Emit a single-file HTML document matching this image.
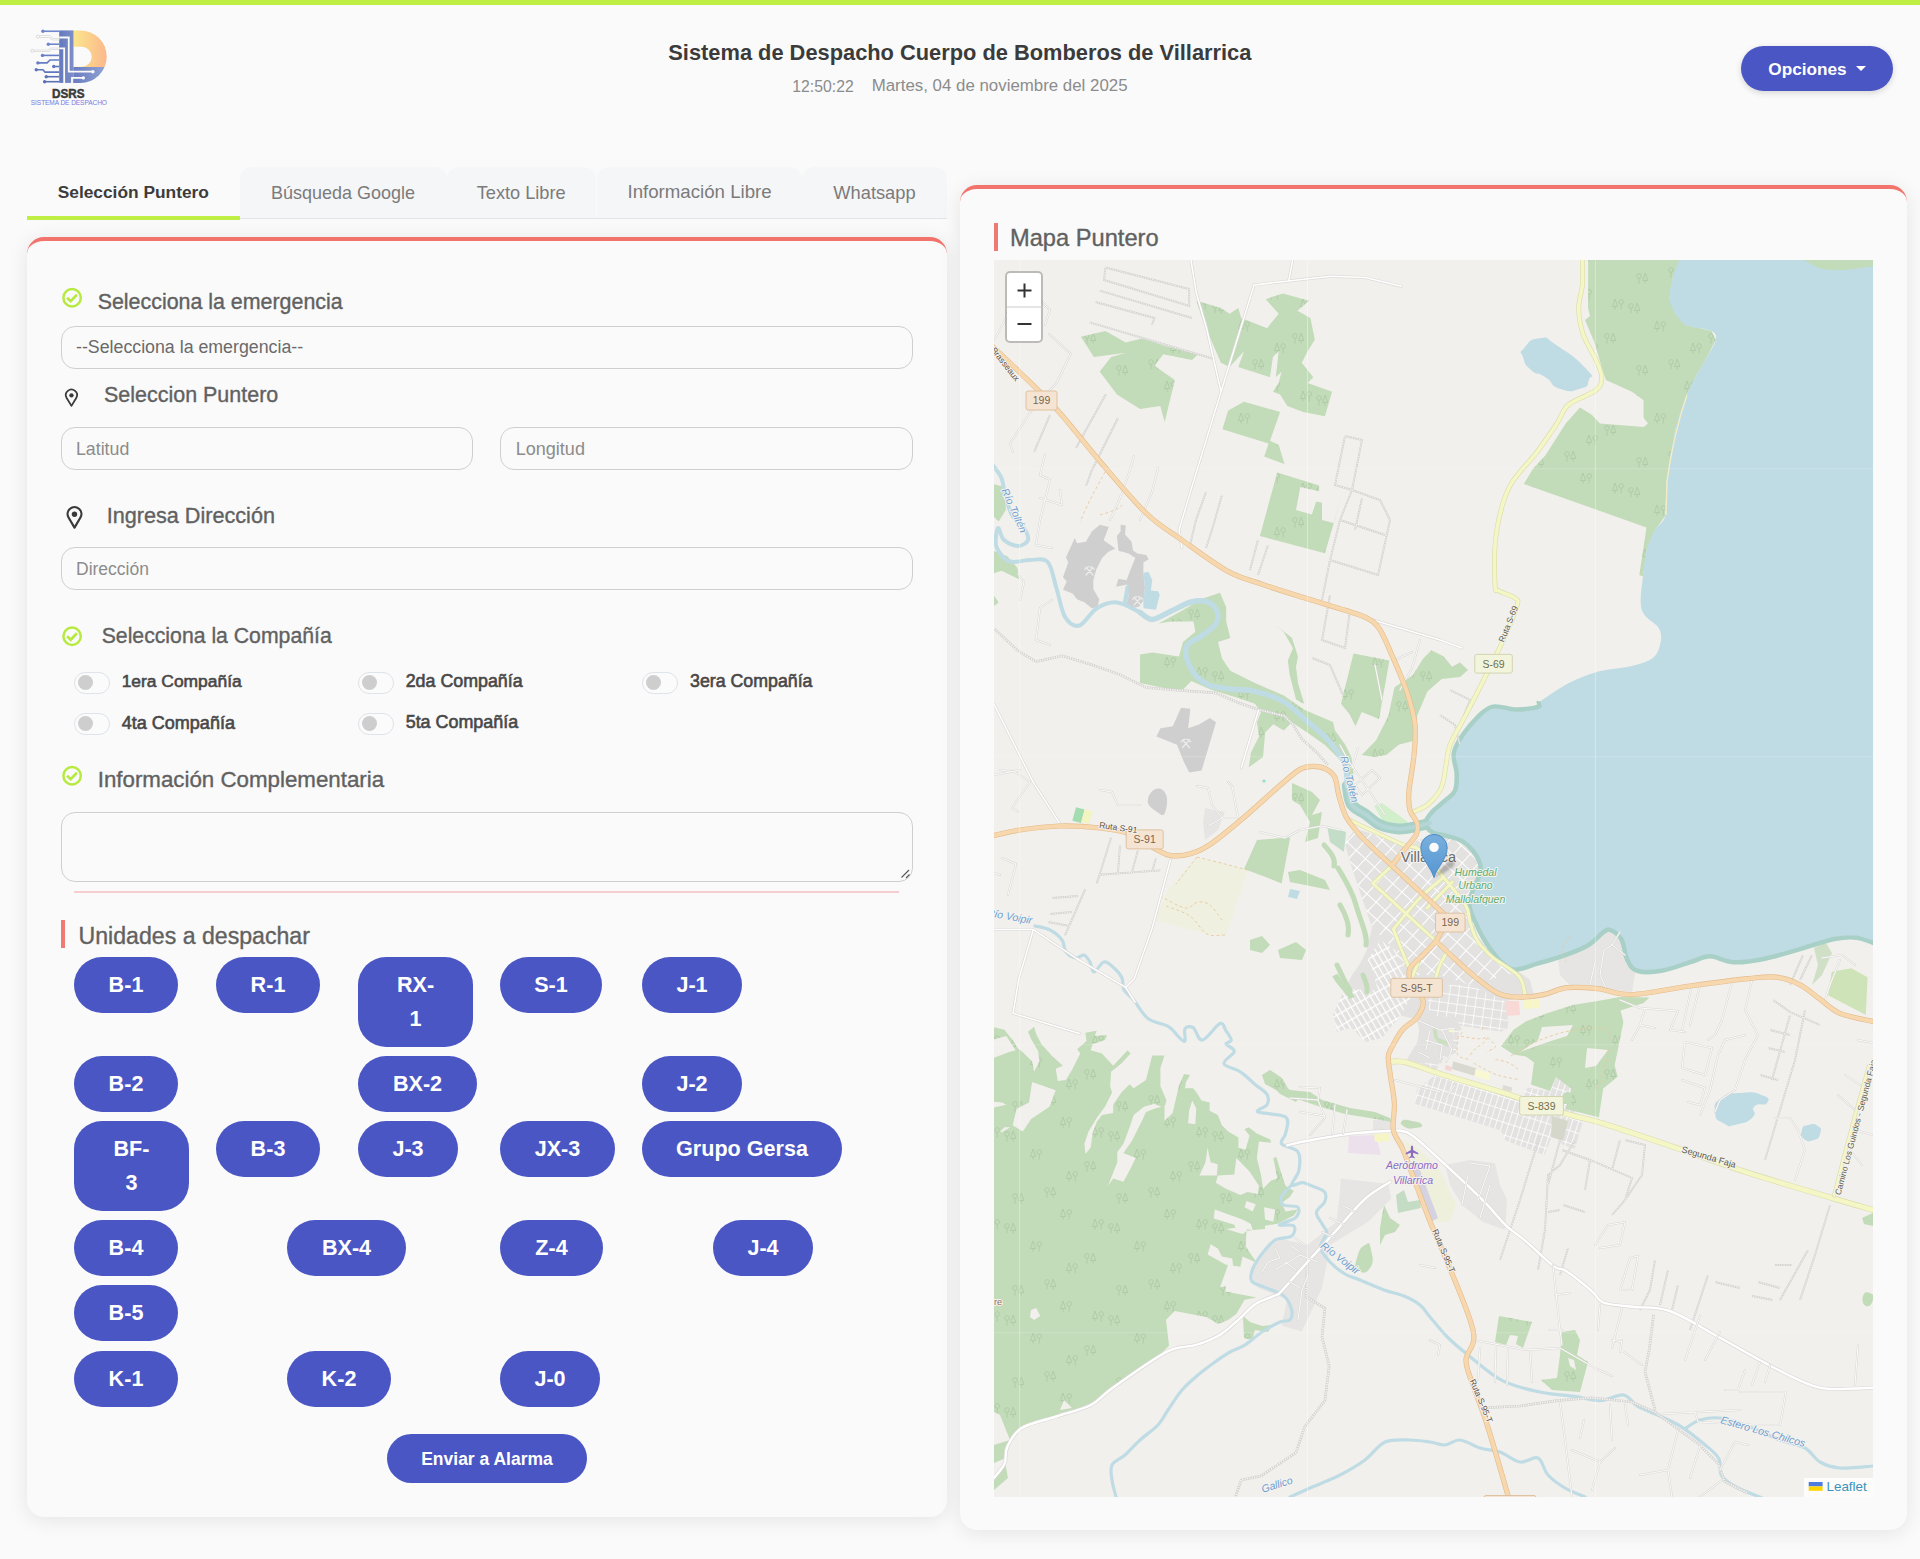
<!DOCTYPE html>
<html lang="es">
<head>
<meta charset="utf-8">
<title>Sistema de Despacho</title>
<style>
*{box-sizing:border-box;margin:0;padding:0}
html,body{width:1920px;height:1559px;overflow:hidden}
body{background:#fafafa;font-family:"Liberation Sans",sans-serif;color:#444;position:relative}
.abs{position:absolute}
.t{position:absolute;white-space:nowrap;line-height:1}
#topbar{left:0;top:0;width:1920px;height:5px;background:#bfee45}
.card{position:absolute;background:#fafafa;border-top:4.5px solid #f1736b;border-radius:17px;box-shadow:0 3px 20px rgba(0,0,0,.09)}
.h{color:#595959;font-size:21px}
.inp{position:absolute;height:43px;border:1px solid #cfcfcf;border-radius:14px;background:#fafafa;color:#8a8a8a;font-size:17px;line-height:41px;padding-left:14px}
.tab{position:absolute;top:167px;height:51px;background:#f5f6f8;border-radius:12px 12px 0 0;color:#7b7b7b;font-size:17px;line-height:50px;text-align:center}
.tg{position:absolute;width:35.5px;height:21.4px;margin:.3px 0 0 .3px;border:1px solid #dfe3ea;border-radius:11px;background:#fbfbfb}
.tg i{position:absolute;left:2.3px;top:2.1px;width:15px;height:15px;border-radius:50%;background:#cecece}
.lb{position:absolute;white-space:nowrap;font-size:16.5px;font-weight:bold;color:#474747;line-height:1}
.u{position:absolute;background:#4a56c4;color:#fff;border-radius:28px;font-weight:bold;font-size:21.6px;text-align:center;line-height:34px;padding-top:11px;height:56px}
</style>
</head>
<body>
<div id="topbar" class="abs"></div>

<!-- LOGO -->
<svg id="logo" class="abs" style="left:28px;top:27px" width="82" height="80" viewBox="28 27 82 80">
<defs>
<linearGradient id="lgO" x1="0" y1="0" x2="1" y2="0"><stop offset="0" stop-color="#fbe68c"/><stop offset="1" stop-color="#fbb88c"/></linearGradient>
<linearGradient id="lgB" x1="0" y1="0" x2="1" y2="0"><stop offset="0" stop-color="#6a7cc0"/><stop offset="1" stop-color="#90a4d4"/></linearGradient>
<linearGradient id="lgS" x1="0" y1="0" x2="1" y2="0"><stop offset="0" stop-color="#6478bd"/><stop offset="1" stop-color="#7e8fc8"/></linearGradient>
<clipPath id="lcTop"><rect x="70" y="28" width="40" height="39"/></clipPath>
<clipPath id="lcBot"><rect x="70" y="67" width="40" height="18"/></clipPath>
</defs>
<!-- D bowl -->
<path clip-path="url(#lcTop)" fill="url(#lgO)" fill-rule="evenodd" d="M73.3 30.4H80.45A26.25 26.25 0 0 1 80.45 82.9H73.3ZM73.3 46.7H81.7A10 10 0 0 1 81.7 66.7H73.3Z"/>
<path clip-path="url(#lcBot)" fill="url(#lgB)" d="M73.3 30.4H80.45A26.25 26.25 0 0 1 80.45 82.9H73.3Z"/>
<!-- stem -->
<rect x="59.2" y="30.4" width="14.3" height="52.5" fill="url(#lgS)"/>
<!-- white circuit lines -->
<g fill="none" stroke="#fafafa" stroke-width="1.8">
<path d="M59.2 37.5H68.75V71.7H92"/>
<path d="M59.2 48.3H64.2V82.9"/>
<path d="M72 82.9V77.9H82.5"/>
</g>
<circle cx="92.9" cy="71.7" r="1.7" fill="#fafafa"/><circle cx="83.3" cy="77.9" r="1.7" fill="#fafafa"/>
<!-- blue traces -->
<g fill="none" stroke="#6f86cd" stroke-width="1.6">
<path d="M59.2 31.25H42.9"/>
<path d="M59.2 44.2H48.3"/>
<path d="M59.2 55.4H42.5" stroke="#667cc4"/>
<path d="M59.2 60H50L47.1 62.9H37.9" stroke="#667cc4"/>
<path d="M59.2 66.5H53.75" stroke="#6076bd"/>
<path d="M59.2 72.1H45L42.9 69.8H36.25" stroke="#6076bd"/>
<path d="M59.2 76.7H46.25" stroke="#5c70b6"/>
<path d="M59.2 81.7H44.6" stroke="#5c70b6"/>
</g>
<g fill="#6f86cd"><circle cx="42.9" cy="31.25" r="1.7"/><circle cx="48.3" cy="44.2" r="1.7"/><circle cx="42.5" cy="55.4" r="1.7" fill="#667cc4"/><circle cx="37.9" cy="62.9" r="1.7" fill="#667cc4"/><circle cx="53.75" cy="66.5" r="1.7" fill="#6076bd"/><circle cx="36.25" cy="69.8" r="1.7" fill="#6076bd"/><circle cx="46.25" cy="76.7" r="1.7" fill="#5c70b6"/><circle cx="44.6" cy="81.7" r="1.7" fill="#5c70b6"/></g>
<!-- white outlined traces -->
<g fill="none" stroke="#c9c9c9" stroke-width="2.2"><path d="M59.2 39.2H52.5L50 36.7H39.5"/><path d="M59.2 48.75H50.8L48.75 50.8H34"/></g>
<g fill="none" stroke="#fafafa" stroke-width="1.2"><path d="M59.2 39.2H52.5L50 36.7H39.5"/><path d="M59.2 48.75H50.8L48.75 50.8H34"/></g>
<circle cx="37.9" cy="36.6" r="1.6" fill="#fafafa" stroke="#c9c9c9" stroke-width=".6"/><circle cx="32.3" cy="50.8" r="1.6" fill="#fafafa" stroke="#c9c9c9" stroke-width=".6"/>
<text x="68.3" y="97.9" text-anchor="middle" font-family="Liberation Sans,sans-serif" font-weight="bold" font-size="12.2" fill="#3a3a3a" stroke="#3a3a3a" stroke-width=".5" textLength="32.6" lengthAdjust="spacingAndGlyphs">DSRS</text>
<text x="30.8" y="105" font-family="Liberation Sans,sans-serif" font-size="6.6" fill="#7b79e0" textLength="76.2" lengthAdjust="spacing">SISTEMA DE DESPACHO</text>
</svg>


<!-- HEADER -->
<div class="abs" id="opc" style="left:1741px;top:46px;width:152px;height:45px;border-radius:23px;background:#4a56c4;box-shadow:0 2px 6px rgba(0,0,0,.15)"></div>
<div class="abs" style="left:1856px;top:66px;width:0;height:0;border-left:5px solid transparent;border-right:5px solid transparent;border-top:5px solid #fff"></div>

<!-- TABS -->
<div class="abs" style="left:27px;top:218px;width:920px;height:1px;background:#e2e4e8"></div>
<div class="tab" style="left:240px;width:207px"></div>
<div class="tab" style="left:447px;width:149px"></div>
<div class="tab" style="left:597px;width:205px"></div>
<div class="tab" style="left:802px;width:145px"></div>
<div class="tab" style="left:27px;width:213px;background:transparent;color:#3c3c3c;font-weight:bold"></div>
<div class="abs" style="left:27px;top:216.3px;width:213px;height:3.4px;background:#bfee45"></div>

<!-- LEFT CARD -->
<div class="card" style="left:27px;top:237px;width:920px;height:1280px"></div>
<!-- RIGHT CARD -->
<div class="card" style="left:960px;top:185px;width:947px;height:1345px"></div>

<!-- FORM -->
<div class="inp" style="left:61px;top:326px;width:852px;color:#6a6a6a"></div>
<div class="inp" style="left:61px;top:427px;width:412px"></div>
<div class="inp" style="left:500px;top:427px;width:413px"></div>
<div class="inp" style="left:61px;top:547px;width:852px"></div>

<div class="tg" style="left:74px;top:672px"><i></i></div>
<div class="tg" style="left:358px;top:672px"><i></i></div>
<div class="tg" style="left:642px;top:672px"><i></i></div>
<div class="tg" style="left:74px;top:713px"><i></i></div>
<div class="tg" style="left:358px;top:713px"><i></i></div>

<div class="inp" style="left:61px;top:812px;width:852px;height:70px"></div>
<div class="abs" style="left:74px;top:891px;width:825px;height:2px;background:#f6cdd2"></div>

<div class="abs" style="left:61px;top:920px;width:4px;height:28px;background:#ee7b73"></div>

<div class="t" style="left:668.3px;top:41.5px;font-size:21.84px;font-weight:bold;color:#3b3b3b">Sistema de Despacho Cuerpo de Bomberos de Villarrica</div>
<div class="t" style="left:792.3px;top:79.0px;font-size:15.77px;color:#8c8c8c">12:50:22</div>
<div class="t" style="left:871.7px;top:78.1px;font-size:16.87px;color:#8c8c8c">Martes, 04 de noviembre del 2025</div>
<div class="t" style="left:1768.3px;top:61.1px;font-size:17.21px;font-weight:bold;color:#ffffff">Opciones</div>
<div class="t" style="left:57.7px;top:184.3px;font-size:17.34px;font-weight:bold;color:#3c3c3c">Selección Puntero</div>
<div class="t" style="left:271.0px;top:183.8px;font-size:17.99px;color:#7b7b7b">Búsqueda Google</div>
<div class="t" style="left:476.7px;top:183.6px;font-size:18.19px;color:#7b7b7b">Texto Libre</div>
<div class="t" style="left:627.5px;top:183.2px;font-size:18.66px;color:#7b7b7b">Información Libre</div>
<div class="t" style="left:833.3px;top:183.5px;font-size:18.30px;color:#7b7b7b">Whatsapp</div>
<div class="t" style="left:97.7px;top:291.9px;font-size:21.40px;-webkit-text-stroke:.35px #616161;color:#616161">Selecciona la emergencia</div>
<div class="t" style="left:76.0px;top:338.9px;font-size:17.78px;color:#6a6a6a">--Selecciona la emergencia--</div>
<div class="t" style="left:104.0px;top:385.2px;font-size:21.48px;-webkit-text-stroke:.35px #616161;color:#616161">Seleccion Puntero</div>
<div class="t" style="left:76.0px;top:440.7px;font-size:17.75px;color:#8c8c8c">Latitud</div>
<div class="t" style="left:515.7px;top:440.4px;font-size:18.06px;color:#8c8c8c">Longitud</div>
<div class="t" style="left:106.7px;top:505.1px;font-size:21.63px;-webkit-text-stroke:.35px #616161;color:#616161">Ingresa Dirección</div>
<div class="t" style="left:76.0px;top:560.9px;font-size:17.51px;color:#8c8c8c">Dirección</div>
<div class="t" style="left:101.7px;top:625.4px;font-size:21.22px;-webkit-text-stroke:.35px #616161;color:#616161">Selecciona la Compañía</div>
<div class="t" style="left:121.7px;top:673.3px;font-size:17.41px;-webkit-text-stroke:.6px #484848;color:#484848">1era Compañía</div>
<div class="t" style="left:405.7px;top:672.9px;font-size:17.83px;-webkit-text-stroke:.6px #484848;color:#484848">2da Compañía</div>
<div class="t" style="left:690.0px;top:673.0px;font-size:17.77px;-webkit-text-stroke:.6px #484848;color:#484848">3era Compañía</div>
<div class="t" style="left:121.7px;top:713.7px;font-size:18.04px;-webkit-text-stroke:.6px #484848;color:#484848">4ta Compañía</div>
<div class="t" style="left:405.7px;top:713.8px;font-size:17.92px;-webkit-text-stroke:.6px #484848;color:#484848">5ta Compañía</div>
<div class="t" style="left:97.7px;top:769.1px;font-size:22.32px;-webkit-text-stroke:.35px #616161;color:#616161">Información Complementaria</div>
<div class="t" style="left:78.5px;top:925.1px;font-size:23.13px;-webkit-text-stroke:.35px #616161;color:#616161">Unidades a despachar</div>
<div class="t" style="left:1010.0px;top:226.9px;font-size:23.67px;-webkit-text-stroke:.35px #616161;color:#616161">Mapa Puntero</div>
<svg class="abs" style="left:0;top:0;pointer-events:none" width="960" height="900" viewBox="0 0 960 900">
<g fill="none" stroke="#b7ea40" stroke-width="2.5">
<circle cx="72.1" cy="297.7" r="8.7"/><path d="M67.1 297.7L70.7 301.2L76.9 294.7" stroke-width="2.7"/>
<circle cx="72.1" cy="636.3" r="8.7"/><path d="M67.1 636.3L70.7 639.8L76.9 633.3" stroke-width="2.7"/>
<circle cx="72.1" cy="775.7" r="8.7"/><path d="M67.1 775.7L70.7 779.2L76.9 772.7" stroke-width="2.7"/>
</g>
<!-- small pin -->
<g transform="translate(65 388.7) scale(0.806)"><path d="M8 21.3L2.05 11.5A6.9 6.9 0 1 1 13.95 11.5Z" fill="none" stroke="#3a3a3a" stroke-width="2.2" stroke-linejoin="round"/><circle cx="8" cy="8.2" r="2.7" fill="#3a3a3a"/></g>
<!-- big pin -->
<g transform="translate(66.5 506)"><path d="M8 21.6L2.05 11.5A6.9 6.9 0 1 1 13.95 11.5Z" fill="none" stroke="#3a3a3a" stroke-width="2.2" stroke-linejoin="round"/><circle cx="8" cy="8.3" r="2.7" fill="#3a3a3a"/></g>
<!-- textarea resize grip -->
<path d="M901.5 877.5L909 870M906 878L909.5 874.5" stroke="#555" stroke-width="1.1" fill="none"/>
</svg>

<!-- UNITS -->
<div class="u" style="left:74px;top:957px;width:104px">B-1</div>
<div class="u" style="left:216px;top:957px;width:104px">R-1</div>
<div class="u" style="left:358px;top:957px;width:115px;height:90px">RX-<br>1</div>
<div class="u" style="left:500px;top:957px;width:102px">S-1</div>
<div class="u" style="left:642px;top:957px;width:100px">J-1</div>

<div class="u" style="left:74px;top:1056px;width:104px">B-2</div>
<div class="u" style="left:358px;top:1056px;width:119px">BX-2</div>
<div class="u" style="left:642px;top:1056px;width:100px">J-2</div>

<div class="u" style="left:74px;top:1121px;width:115px;height:90px">BF-<br>3</div>
<div class="u" style="left:216px;top:1121px;width:104px">B-3</div>
<div class="u" style="left:358px;top:1121px;width:100px">J-3</div>
<div class="u" style="left:500px;top:1121px;width:115px">JX-3</div>
<div class="u" style="left:642px;top:1121px;width:200px">Grupo Gersa</div>

<div class="u" style="left:74px;top:1220px;width:104px">B-4</div>
<div class="u" style="left:287px;top:1220px;width:119px">BX-4</div>
<div class="u" style="left:500px;top:1220px;width:103px">Z-4</div>
<div class="u" style="left:713px;top:1220px;width:100px">J-4</div>

<div class="u" style="left:74px;top:1285px;width:104px">B-5</div>

<div class="u" style="left:74px;top:1351px;width:104px">K-1</div>
<div class="u" style="left:287px;top:1351px;width:104px">K-2</div>
<div class="u" style="left:500px;top:1351px;width:100px">J-0</div>

<div class="u" style="left:387px;top:1434px;width:200px;height:49px;border-radius:25px;font-size:17.5px;padding-top:7.5px">Enviar a Alarma</div>

<!-- MAP TITLE -->
<div class="abs" style="left:994px;top:223px;width:4px;height:28px;background:#ee7b73"></div>

<!-- MAP -->
<svg id="map" class="abs" style="left:994px;top:260px" width="879" height="1237" viewBox="994 260 879 1237">
<defs><pattern id="grid1" width="12.4" height="12.4" patternUnits="userSpaceOnUse" patternTransform="translate(1392 865.6) rotate(42.4)"><path d="M0 0H12.4M0 0V12.4" stroke="#fff" stroke-width="1.9" fill="none"/></pattern>
<pattern id="grid2" width="9" height="9" patternUnits="userSpaceOnUse" patternTransform="translate(1430 1000) rotate(8)"><path d="M0 0H9M0 0V9" stroke="#fff" stroke-width="1.5" fill="none"/></pattern>
<pattern id="grid3" width="5.5" height="11" patternUnits="userSpaceOnUse" patternTransform="translate(1340 1000) rotate(-30)"><path d="M0 0H5.5M0 0V11" stroke="#fff" stroke-width="2.3" fill="none"/></pattern>
<pattern id="grid4" width="6" height="12" patternUnits="userSpaceOnUse" patternTransform="translate(1435.5 1075) rotate(17.6)"><path d="M0 0H6M0 0V12" stroke="#fff" stroke-width="1.6" fill="none"/></pattern>
<pattern id="trees" width="104" height="92" patternUnits="userSpaceOnUse" patternTransform="translate(1003 262)"><g fill="none" stroke="#aecaa6" stroke-width="0.9"><circle cx="12" cy="14" r="2.3"/><path d="M12 16.3v5.2M18.2 11l-2.6 7.5h5.2zM18.2 18.5v3"/><circle cx="66.2" cy="30" r="2.3"/><path d="M66.2 32.3v5.2M60 27l-2.6 7.5h5.2zM60 34.5v3"/><circle cx="36.2" cy="62" r="2.3"/><path d="M36.2 64.3v5.2M30 59l-2.6 7.5h5.2zM30 66.5v3"/><circle cx="84" cy="74" r="2.3"/><path d="M84 76.3v5.2M90.2 71l-2.6 7.5h5.2zM90.2 78.5v3"/><circle cx="44" cy="8" r="2.3"/><path d="M44 10.3v5.2M50.2 5l-2.6 7.5h5.2zM50.2 12.5v3"/><circle cx="98.2" cy="40" r="2.3"/><path d="M98.2 42.3v5.2M92 37l-2.6 7.5h5.2zM92 44.5v3"/><circle cx="4" cy="44" r="2.3"/><path d="M4 46.3v5.2M10.2 41l-2.6 7.5h5.2zM10.2 48.5v3"/><circle cx="72.2" cy="84" r="2.3"/><path d="M72.2 86.3v5.2M66 81l-2.6 7.5h5.2zM66 88.5v3"/></g></pattern>
<linearGradient id="mk" x1="0" y1="0" x2="0" y2="1"><stop offset="0" stop-color="#7ab0de"/><stop offset="1" stop-color="#5596d2"/></linearGradient>
<filter id="blur1" x="-50%" y="-50%" width="200%" height="200%"><feGaussianBlur stdDeviation="1.3"/></filter>
</defs>
<rect x="994" y="260" width="879" height="1237" fill="#f2f0ec"/>
<polygon points="1344.8,843.4 1355,828.7 1380,836 1403.8,845 1421.5,839 1440,836 1455,840 1470,850 1478,863 1478,875 1471,892 1468.7,905.4 1477.5,936.4 1495.2,957 1518.8,971.8 1530,980 1534,996 1505,1001 1509.4,1027.7 1501,1031.8 1460,1025.7 1456,1052.4 1443.7,1058.5 1435.5,1070.8 1410.8,1058.5 1421,1038 1417,1019.5 1400.6,1015.4 1382,1038 1365.7,1042 1351.3,1027.7 1337,1031.8 1332.8,1015.4 1339,1001 1345,988.7 1352,975 1359.5,964.4 1367,949.7 1372,927.5 1362,898 1352,868.5" fill="#e3e2e1" />
<polygon points="1344.8,843.4 1355,828.7 1380,836 1403.8,845 1421.5,839 1440,836 1455,840 1470,850 1478,863 1478,875 1471,892 1468.7,905.4 1477.5,936.4 1495.2,957 1518.8,971.8 1470,985 1440,975 1405,975 1395,950 1372,927.5 1362,898 1352,868.5" fill="url(#grid1)" />
<polygon points="1339,1001 1345,988.7 1378,990.8 1371.8,968.2 1367.7,960 1380,940 1395,950 1405,975 1412,995 1400.6,1015.4 1382,1038 1365.7,1042 1351.3,1027.7 1337,1031.8 1332.8,1015.4" fill="url(#grid3)" />
<polygon points="1425,985 1470,985 1505,1001 1509.4,1027.7 1501,1031.8 1460,1025.7 1456,1052.4 1443.7,1058.5 1435.5,1070.8 1425,1065 1421,1038 1430,1015" fill="url(#grid2)" />
<polygon points="1417,1089.3 1435.5,1075 1521.7,1099.6 1525.8,1087.3 1550.4,1091.4 1556.6,1077 1573,1087.3 1566.8,1103.7 1583.2,1120 1575,1148.8 1562.7,1144.7 1552.5,1134.5 1544.3,1155 1505.3,1140.6 1501,1130.4 1415,1103.7" fill="#e3e2e1" />
<polygon points="1417,1089.3 1435.5,1075 1521.7,1099.6 1525.8,1087.3 1550.4,1091.4 1556.6,1077 1573,1087.3 1566.8,1103.7 1583.2,1120 1575,1148.8 1562.7,1144.7 1552.5,1134.5 1544.3,1155 1505.3,1140.6 1501,1130.4 1415,1103.7" fill="url(#grid4)" />
<polygon points="1552,1116 1568,1121 1563,1141 1551,1137" fill="#d6d7cb" />
<polygon points="1419.8,1015.7 1458.3,1017 1458.3,1024.7 1453.2,1029.8 1453.2,1049 1442.9,1051.6 1441.6,1063.2 1412.1,1063.2 1407,1059.3 1417.2,1042.6 1419.8,1027.2" fill="#e3e2e1" />
<polygon points="1453.2,1061.2 1476.2,1068.3 1475,1076 1451.9,1068.9" fill="#d9d9d2" />
<polygon points="1445.5,1065.1 1451.9,1067 1451.2,1071.5 1444.8,1069.6" fill="#f6d6d2" />
<polygon points="1475.6,1068.9 1490.4,1073.4 1489.1,1080.5 1474.3,1076" fill="#f8f8d2" />
<polygon points="1503.2,1085 1512.2,1087.5 1511.5,1092 1502.5,1089.5" fill="#dcdcd4" />
<polygon points="1449.3,1027.2 1453.8,1027.9 1453.2,1032.4 1448.7,1031.7" fill="#f8f8d2" />
<polygon points="1432.6,1028.5 1436.5,1027.2 1437.8,1037.5 1449.3,1042.6 1448,1046.5 1437.8,1042.6 1433.9,1037.5" fill="#c9dfc0" />
<polygon points="1445,1165 1470,1160 1495,1163 1500,1185 1507,1200 1505,1230 1483,1222 1462,1205 1450,1185" fill="#e6e5e4" />
<polygon points="1340.8,1178.4 1388.4,1184.1 1391.3,1198.6 1368.2,1221.7 1330.6,1244.8 1322,1288.1 1301.8,1331.4 1281.6,1325.6 1287.3,1299.6 1258.5,1288.1 1249.8,1279.4 1252.7,1267.9 1267.1,1247.6 1281.6,1239 1307.6,1244.8 1336.4,1221.7 1339.3,1198.6" fill="#e6e5e4" />
<polygon points="1373,1120 1392,1120 1392,1132 1373,1132" fill="#e6e5e4" />
<polygon points="1403,1140 1420,1150 1440,1170 1456,1205 1450,1222 1436,1222 1425,1190 1412,1160" fill="#eef0dc" />
<polygon points="1411,1165 1418,1165 1438,1218 1431,1222" fill="#d5d3e2" />
<polygon points="1396,1195 1404,1190 1408,1202 1420,1200 1421,1208 1398,1213" fill="#c5dcc4" />
<polygon points="1349,1136 1376,1135 1381,1155 1348,1153" fill="#ece0ec" />
<polygon points="1374,1134 1390,1133 1390,1141 1375,1142" fill="#f5f5c6" />
<polygon points="1505,1001 1519,1001 1520,1015 1507,1016" fill="#f8d9d6" />
<polygon points="1524,1000 1540,999 1540,1008 1524,1009" fill="#f6f6c8" />
<polygon points="1558,958 1572,948 1590,942 1604,932 1612,930 1622,940 1628,958 1636,968 1632,992 1600,988 1570,985 1560,975" fill="#e6e5e4" />
<polygon points="1374,806 1382,803 1408,822 1402,829 1385,825" fill="#d2efcc" />
<polygon points="1197,857 1248,870 1226,935 1207,934 1154,920 1168,890" fill="#eff0df" />
<polygon points="1181,707.8 1190.3,708.8 1188.2,728.3 1199.5,724.2 1209.8,718 1216,722.2 1201.6,770.4 1189.3,772.4 1184,762.2 1177,744.7 1156.4,736.5 1160.5,728.3 1172.8,726.3" fill="#cfcfcf" />
<path d="M1148.2 798 C1150.3 790.9 1156.8 785.9 1162.6 790 C1168.4 794.1 1167.8 803.3 1165.7 810.4 C1163.6 817.5 1162.2 815.5 1156.4 811.4 C1150.6 807.3 1146.1 805.1 1148.2 798Z" fill="#cfcfcf" />
<polygon points="1099.9,524.8 1108.8,527 1103.6,540.3 1115.4,548.4 1108,552.1 1102.1,558 1096.2,569.8 1093.3,580.2 1093.3,589 1099.2,599.3 1097.7,606.7 1091.8,608.2 1084.4,602.3 1077,599.3 1072.6,593.4 1063,589.7 1066.7,581.6 1063,577.2 1068.2,562.5 1066,557.3 1074.8,538.1 1077,543.3 1085.9,541.8 1091.8,531.5" fill="#cfcfcf" />
<polygon points="1120.6,524.8 1125.7,525.6 1125,534.4 1131.6,541.8 1133.1,550.7 1137.5,553.6 1146.4,555.1 1148.6,559.5 1143.4,562.5 1143.4,572.8 1144.9,587.5 1143.4,600.8 1139,606.7 1131.6,608.2 1126.5,603.8 1128.7,596.4 1127.2,584.6 1116.1,586.8 1118.4,578.7 1126.5,580.2 1131.6,566.9 1135.3,558 1128.7,553.6 1118.4,550.7 1116.9,535.9 1120.6,531.5" fill="#cfcfcf" />
<polygon points="1205,808 1225,812 1218,830 1205,840 1203,822" fill="#e6e5e4" />
<polygon points="1588.2,260 1679.7,260 1672.5,279 1669.6,299 1675.4,313.7 1687,325.3 1711.5,331 1715.8,339.7 1707,357 1698.5,371.5 1687,394.6 1675.4,429.2 1666.7,481.2 1665.3,515.8 1655,530 1646.5,550.5 1643,576.4 1639.3,575 1646.5,527.4 1523.8,484 1532.5,469.6 1545.5,455.2 1565.7,423.4 1580,407.6 1591.7,414.8 1600,423.4 1643.6,427 1648,423.4 1643.6,417.7 1643.6,400.3 1632,391.7 1606,380 1603,371.5 1594.5,342.6 1585,320 1590,316 1588,308" fill="#c2dbb8" />
<polygon points="1588.2,260 1679.7,260 1672.5,279 1669.6,299 1675.4,313.7 1687,325.3 1711.5,331 1715.8,339.7 1707,357 1698.5,371.5 1687,394.6 1675.4,429.2 1666.7,481.2 1665.3,515.8 1655,530 1646.5,550.5 1643,576.4 1639.3,575 1646.5,527.4 1523.8,484 1532.5,469.6 1545.5,455.2 1565.7,423.4 1580,407.6 1591.7,414.8 1600,423.4 1643.6,427 1648,423.4 1643.6,417.7 1643.6,400.3 1632,391.7 1606,380 1603,371.5 1594.5,342.6 1585,320 1590,316 1588,308" fill="url(#trees)"/>
<polygon points="1080.9,336.8 1105.5,331.1 1125.7,342.6 1143,338.3 1163.2,345.5 1197.9,354.2 1192.1,359.9 1163.2,354.2 1154.5,365.7 1174.8,380.1 1164.7,422 1160.3,406.1 1140.1,409 1117,394.6 1099.7,371.5 1111.2,357 1125.7,352.7 1093.9,357" fill="#c2dbb8" />
<polygon points="1080.9,336.8 1105.5,331.1 1125.7,342.6 1143,338.3 1163.2,345.5 1197.9,354.2 1192.1,359.9 1163.2,354.2 1154.5,365.7 1174.8,380.1 1164.7,422 1160.3,406.1 1140.1,409 1117,394.6 1099.7,371.5 1111.2,357 1125.7,352.7 1093.9,357" fill="url(#trees)"/>
<polygon points="1196.4,300.7 1220.9,308 1229.6,313.7 1238.3,308 1241.2,318.1 1267.1,328.2 1278.7,313.7 1265.7,299.3 1283,293.5 1309,300.7 1297.4,310.8 1310.4,318.1 1314.8,339.7 1307.6,351.3 1301.8,362.8 1313.3,377.2 1307.6,383 1316.2,385.9 1332.1,391.7 1324.9,416.2 1303.2,411.9 1287.3,406.1 1280.1,394.6 1272.9,391.7 1278.7,383 1281.6,371.5 1275.8,377.2 1278.7,351.3 1272.9,357 1270,377.2 1238.3,367.1 1244,351.3 1229.6,367.1 1220.9,362.8 1203.6,322.4" fill="#c2dbb8" />
<polygon points="1196.4,300.7 1220.9,308 1229.6,313.7 1238.3,308 1241.2,318.1 1267.1,328.2 1278.7,313.7 1265.7,299.3 1283,293.5 1309,300.7 1297.4,310.8 1310.4,318.1 1314.8,339.7 1307.6,351.3 1301.8,362.8 1313.3,377.2 1307.6,383 1316.2,385.9 1332.1,391.7 1324.9,416.2 1303.2,411.9 1287.3,406.1 1280.1,394.6 1272.9,391.7 1278.7,383 1281.6,371.5 1275.8,377.2 1278.7,351.3 1272.9,357 1270,377.2 1238.3,367.1 1244,351.3 1229.6,367.1 1220.9,362.8 1203.6,322.4" fill="url(#trees)"/>
<polygon points="1228.2,410.4 1244,401.8 1280.1,411.9 1270,440.8 1278.7,445.1 1284.5,463.9 1264.2,456.6 1268.6,443.6 1222.4,429.2" fill="#c2dbb8" />
<polygon points="1228.2,410.4 1244,401.8 1280.1,411.9 1270,440.8 1278.7,445.1 1284.5,463.9 1264.2,456.6 1268.6,443.6 1222.4,429.2" fill="url(#trees)"/>
<polygon points="1277.2,472.5 1319.1,485.5 1319.1,491.3 1300.3,486.9 1296,510 1311.9,514.4 1316.2,501.4 1322,502.8 1322,520.1 1333.5,523 1342.2,494.2 1324.9,553.3 1259.9,536" fill="#c2dbb8" />
<polygon points="1277.2,472.5 1319.1,485.5 1319.1,491.3 1300.3,486.9 1296,510 1311.9,514.4 1316.2,501.4 1322,502.8 1322,520.1 1333.5,523 1342.2,494.2 1324.9,553.3 1259.9,536" fill="url(#trees)"/>
<polygon points="1158.5,623.6 1181,611.3 1201.6,599 1220,592.8 1226.2,607.2 1226.2,621.6 1230.3,638 1218,642 1222,658.5 1230.3,670.8 1255,683 1283.7,695.5 1304.2,709.8 1333,722 1335,730.4 1345.3,744.7 1351.4,757 1353.5,773.5 1347.3,777.6 1341,761 1324.7,744.7 1304.2,730.4 1291.9,722.2 1283.7,730.4 1273.4,724.2 1265.2,732.4 1263,757 1248.8,767.3 1250.8,753 1259,736.5 1257,722.2 1261,712 1255,703.7 1236.5,697.5 1209.8,689.3 1191.3,681 1181,691.4 1140,683 1140,654.4 1152.3,652.4 1179,656.5 1183,642 1195.4,631.8 1193.4,621.6 1170.8,621.6" fill="#c2dbb8" />
<polygon points="1158.5,623.6 1181,611.3 1201.6,599 1220,592.8 1226.2,607.2 1226.2,621.6 1230.3,638 1218,642 1222,658.5 1230.3,670.8 1255,683 1283.7,695.5 1304.2,709.8 1333,722 1335,730.4 1345.3,744.7 1351.4,757 1353.5,773.5 1347.3,777.6 1341,761 1324.7,744.7 1304.2,730.4 1291.9,722.2 1283.7,730.4 1273.4,724.2 1265.2,732.4 1263,757 1248.8,767.3 1250.8,753 1259,736.5 1257,722.2 1261,712 1255,703.7 1236.5,697.5 1209.8,689.3 1191.3,681 1181,691.4 1140,683 1140,654.4 1152.3,652.4 1179,656.5 1183,642 1195.4,631.8 1193.4,621.6 1170.8,621.6" fill="url(#trees)"/>
<polygon points="1275.5,624.7 1292,638 1298,656.5 1296,666.7 1298,683 1304.2,703.7 1296,699.6 1289.8,675 1287.8,660.6 1293,648.3 1283.7,631.8" fill="#c2dbb8" />
<polygon points="1275.5,624.7 1292,638 1298,656.5 1296,666.7 1298,683 1304.2,703.7 1296,699.6 1289.8,675 1287.8,660.6 1293,648.3 1283.7,631.8" fill="url(#trees)"/>
<polygon points="1353.5,653.4 1389.4,660.6 1379,719 1361.7,711.9 1355.5,726.3 1349.4,714 1341,703.7" fill="#c2dbb8" />
<polygon points="1353.5,653.4 1389.4,660.6 1379,719 1361.7,711.9 1355.5,726.3 1349.4,714 1341,703.7" fill="url(#trees)"/>
<polygon points="1394.5,687.3 1413,675 1423.2,658.5 1431.5,650.3 1443.8,656.5 1452,666.7 1460,662.6 1468,670 1460,677 1441.7,679 1427.4,691.4 1417,716 1415,740.6 1398.6,744.7 1386.3,755 1374,757 1361.7,755 1376,740.6 1388.4,716" fill="#c2dbb8" />
<polygon points="1394.5,687.3 1413,675 1423.2,658.5 1431.5,650.3 1443.8,656.5 1452,666.7 1460,662.6 1468,670 1460,677 1441.7,679 1427.4,691.4 1417,716 1415,740.6 1398.6,744.7 1386.3,755 1374,757 1361.7,755 1376,740.6 1388.4,716" fill="url(#trees)"/>
<polygon points="992.9,484.1 1004.4,486.9 1005.9,510 998.7,521.6 992.9,515.8" fill="#c2dbb8" />
<polygon points="992.9,550.5 1007.3,556.2 1017.4,567.8 1018.9,579.3 1001.5,570.7 992.9,573.6" fill="#c2dbb8" />
<polygon points="992.9,550.5 1007.3,556.2 1017.4,567.8 1018.9,579.3 1001.5,570.7 992.9,573.6" fill="url(#trees)"/>
<polygon points="992.9,593.8 998.7,602.4 992.9,606.8" fill="#c2dbb8" />
<polygon points="1244,869 1257,840 1290.2,837.2 1281.6,883.4 1267,877.6" fill="#c2dbb8" />
<polygon points="1292,783 1312,792 1320,800 1312,815 1322,812 1318,838 1305,842 1310,822 1300,805 1292,800" fill="#c2dbb8" />
<polygon points="1292,783 1312,792 1320,800 1312,815 1322,812 1318,838 1305,842 1310,822 1300,805 1292,800" fill="url(#trees)"/>
<polygon points="1288,872 1300,870 1325,880 1330,890 1310,886 1290,882" fill="#c2dbb8" />
<polygon points="1288,872 1300,870 1325,880 1330,890 1310,886 1290,882" fill="url(#trees)"/>
<polygon points="1250,940 1262,936 1270,945 1262,953 1250,950" fill="#c2dbb8" />
<polygon points="1278,950 1296,942 1306,950 1302,960 1280,958" fill="#c2dbb8" />
<polygon points="1327,826 1346,832 1344,852 1330,842" fill="#c4ddc9" />
<path d="M1324 845 C1330 852 1336 858 1334 866 M1338 868 C1345 880 1352 890 1356 905 C1360 920 1368 935 1366 945 M1340 905 C1346 915 1350 925 1348 935 M1337 965 C1342 975 1346 985 1350 990 M1363 975 C1366 982 1368 988 1367 992" stroke="#c2dbb8" stroke-width="5" fill="none" stroke-linecap="round"/>
<polygon points="1501,1046.2 1513.5,1029.8 1525.8,1021.6 1546.3,1013.4 1573,1005 1597.6,1001 1620,997 1649.4,997.4 1643.6,1003 1620.5,1010.4 1623.4,1022 1614.7,1065.3 1617.6,1076.8 1603.2,1088.4 1598.9,1117.2 1565.7,1109 1571.5,1088.9 1556,1077 1550,1091 1531,1084.5 1534,1062.6 1525.8,1056.5 1513.5,1054.4" fill="#c2dbb8" />
<polygon points="1501,1046.2 1513.5,1029.8 1525.8,1021.6 1546.3,1013.4 1573,1005 1597.6,1001 1620,997 1649.4,997.4 1643.6,1003 1620.5,1010.4 1623.4,1022 1614.7,1065.3 1617.6,1076.8 1603.2,1088.4 1598.9,1117.2 1565.7,1109 1571.5,1088.9 1556,1077 1550,1091 1531,1084.5 1534,1062.6 1525.8,1056.5 1513.5,1054.4" fill="url(#trees)"/>
<polygon points="1542,1027 1573,1025 1567,1036 1548,1042 1520,1052 1538,1040" fill="#f2f0ec" />
<polygon points="1587,1048 1608,1050 1596,1066 1585,1068" fill="#f2f0ec" />
<polygon points="1831.7,971.8 1851.4,968.2 1867.6,977.2 1865.8,1015 1828,995.2" fill="#cfe3b8" />
<polygon points="1814,948 1826,943 1832,953 1822,975 1812,985 1818,965" fill="#cfe0c6" />
<path d="M1402 1121 C1404.3 1119 1405.3 1119.7 1412 1121 C1418.7 1122.3 1421 1122.7 1422 1125 C1423 1127.3 1420.7 1127.3 1415 1128 C1409.3 1128.7 1409.3 1129.3 1405 1127 C1400.7 1124.7 1399.7 1123 1402 1121Z" fill="#c2dbb8" />
<path d="M1335 975 C1340 985 1348 990 1352 998" stroke="#c2dbb8" stroke-width="6" fill="none"/>
<polygon points="1384,1205 1390,1218 1400,1225 1395,1232 1385,1235 1380,1245 1380,1228" fill="#c2dbb8" />
<polygon points="1384,1205 1390,1218 1400,1225 1395,1232 1385,1235 1380,1245 1380,1228" fill="url(#trees)"/>
<path d="M1357 1258 C1359.3 1249.7 1360.3 1247.7 1365 1245 C1369.7 1242.3 1369.3 1242.3 1371 1250 C1372.7 1257.7 1374.3 1261.3 1370 1268 C1365.7 1274.7 1362.3 1273.3 1358 1270 C1353.7 1266.7 1354.7 1266.3 1357 1258Z" fill="#c2dbb8" />
<path d="M1561 1100 C1561.7 1096 1564.3 1092 1568 1092 C1571.7 1092 1572.7 1096 1572 1100 C1571.3 1104 1569.7 1104 1566 1104 C1562.3 1104 1560.3 1104 1561 1100Z" fill="#c2dbb8" />
<polygon points="1499,1316 1532,1322 1523,1348 1516,1344 1518,1336 1510,1335 1506,1345 1495,1342" fill="#c2dbb8" />
<polygon points="1499,1316 1532,1322 1523,1348 1516,1344 1518,1336 1510,1335 1506,1345 1495,1342" fill="url(#trees)"/>
<polygon points="1562,1332 1575,1330 1580,1340 1577,1355 1588,1362 1580,1392 1552,1390 1541,1380 1557,1378 1560,1355" fill="#c2dbb8" />
<polygon points="1562,1332 1575,1330 1580,1340 1577,1355 1588,1362 1580,1392 1552,1390 1541,1380 1557,1378 1560,1355" fill="url(#trees)"/>
<polygon points="1568,1358 1574,1360 1576,1370 1570,1366" fill="#f2f0ec" />
<path d="M1863 1296 C1864.3 1291.7 1866.7 1291.7 1870 1293 C1873.3 1294.3 1874.3 1295.7 1873 1300 C1871.7 1304.3 1869.3 1307.3 1866 1306 C1862.7 1304.7 1861.7 1300.3 1863 1296Z" fill="#c2dbb8" />
<polygon points="1862,1218 1873,1213 1873,1226 1864,1224" fill="#c2dbb8" />
<polygon points="1262,1075 1275,1078 1290,1090 1310,1092 1322,1100 1350,1108 1375,1112 1390,1118 1392,1122 1370,1118 1345,1114 1318,1106 1300,1100 1280,1092 1265,1084" fill="#c2dbb8" />
<polygon points="1262,1075 1275,1078 1290,1090 1310,1092 1322,1100 1350,1108 1375,1112 1390,1118 1392,1122 1370,1118 1345,1114 1318,1106 1300,1100 1280,1092 1265,1084" fill="url(#trees)"/>
<polygon points="992.1,1026.7 1004.4,1029.8 1012.6,1040 1017.7,1048.2 1022.8,1052.3 1032.1,1061.6 1034.1,1071.8 1039.3,1061.6 1038.2,1051.3 1031.1,1039 1028,1031.8 1034.1,1026.7 1036.2,1033.9 1041.3,1044.1 1051.6,1055.4 1062.9,1065.7 1055.7,1068.8 1057.7,1081.1 1065.9,1080 1072.1,1069.8 1080.3,1053.4 1077.2,1049.3 1086.5,1041.1 1085.4,1032.8 1096.7,1030.8 1094.7,1035.9 1107,1034.9 1104.9,1040 1092.6,1044.1 1090.6,1050.3 1101.9,1053.4 1113.2,1065.7 1127.5,1050.3 1130.6,1053.4 1121.4,1063.6 1111.1,1071.8 1110.1,1086.2 1112.1,1092.4 1104.9,1106.7 1096.7,1118 1088.5,1131.4 1084.4,1143.7 1085.4,1153.9 1090.6,1147.8 1092.6,1133.4 1096.7,1122.1 1101.9,1114.9 1113.2,1112.9 1113.2,1104.7 1121.4,1092.4 1129.6,1084.2 1133.7,1088.3 1146,1080 1152.2,1055.4 1164.5,1055.4 1160.4,1067.7 1160.4,1086.2 1166.5,1100.6 1164.5,1106.7 1164.5,1121.1 1172.7,1112.9 1178.8,1086.2 1184,1073.9 1190.1,1074.9 1186,1082.1 1185,1088.3 1193.2,1088.3 1197.3,1093.4 1201.4,1100.6 1209.6,1102.6 1209.6,1110.8 1217.8,1114.9 1221.9,1125.2 1228.1,1131.4 1238.4,1137.5 1238.4,1147.8 1245.5,1149.8 1249.6,1135.5 1244.5,1129.3 1248.6,1127.3 1256.8,1133.4 1270.2,1139.6 1271.2,1142.7 1258.9,1141.6 1256.8,1158 1260.9,1174.5 1263,1188.8 1271.2,1180.6 1277.4,1178.6 1273.3,1158 1276.3,1157 1283.5,1180.6 1285.6,1185.8 1293.8,1190.9 1289.7,1197 1281.5,1203.2 1285.6,1211.4 1297.9,1209.4 1293.8,1215.5 1277.4,1223.7 1265,1225.8 1265,1228.9 1252.7,1229.9 1246.6,1230.9 1245.5,1246.3 1256.8,1262.7 1242.5,1256.6 1240.4,1266.8 1228.1,1264.8 1219.9,1287.4 1226,1286.3 1225,1291.5 1256.8,1297.6 1244.5,1299.7 1236.3,1314 1228.1,1320 1218,1324 1206.5,1317 1174.8,1311 1166,1319.8 1169,1345.8 1157.4,1357.3 1111.2,1389 1091,1405 1056.4,1415 1021.8,1428 1007.3,1444 1004.4,1458.4 992,1464" fill="#c2dbb8" />
<polygon points="992.1,1026.7 1004.4,1029.8 1012.6,1040 1017.7,1048.2 1022.8,1052.3 1032.1,1061.6 1034.1,1071.8 1039.3,1061.6 1038.2,1051.3 1031.1,1039 1028,1031.8 1034.1,1026.7 1036.2,1033.9 1041.3,1044.1 1051.6,1055.4 1062.9,1065.7 1055.7,1068.8 1057.7,1081.1 1065.9,1080 1072.1,1069.8 1080.3,1053.4 1077.2,1049.3 1086.5,1041.1 1085.4,1032.8 1096.7,1030.8 1094.7,1035.9 1107,1034.9 1104.9,1040 1092.6,1044.1 1090.6,1050.3 1101.9,1053.4 1113.2,1065.7 1127.5,1050.3 1130.6,1053.4 1121.4,1063.6 1111.1,1071.8 1110.1,1086.2 1112.1,1092.4 1104.9,1106.7 1096.7,1118 1088.5,1131.4 1084.4,1143.7 1085.4,1153.9 1090.6,1147.8 1092.6,1133.4 1096.7,1122.1 1101.9,1114.9 1113.2,1112.9 1113.2,1104.7 1121.4,1092.4 1129.6,1084.2 1133.7,1088.3 1146,1080 1152.2,1055.4 1164.5,1055.4 1160.4,1067.7 1160.4,1086.2 1166.5,1100.6 1164.5,1106.7 1164.5,1121.1 1172.7,1112.9 1178.8,1086.2 1184,1073.9 1190.1,1074.9 1186,1082.1 1185,1088.3 1193.2,1088.3 1197.3,1093.4 1201.4,1100.6 1209.6,1102.6 1209.6,1110.8 1217.8,1114.9 1221.9,1125.2 1228.1,1131.4 1238.4,1137.5 1238.4,1147.8 1245.5,1149.8 1249.6,1135.5 1244.5,1129.3 1248.6,1127.3 1256.8,1133.4 1270.2,1139.6 1271.2,1142.7 1258.9,1141.6 1256.8,1158 1260.9,1174.5 1263,1188.8 1271.2,1180.6 1277.4,1178.6 1273.3,1158 1276.3,1157 1283.5,1180.6 1285.6,1185.8 1293.8,1190.9 1289.7,1197 1281.5,1203.2 1285.6,1211.4 1297.9,1209.4 1293.8,1215.5 1277.4,1223.7 1265,1225.8 1265,1228.9 1252.7,1229.9 1246.6,1230.9 1245.5,1246.3 1256.8,1262.7 1242.5,1256.6 1240.4,1266.8 1228.1,1264.8 1219.9,1287.4 1226,1286.3 1225,1291.5 1256.8,1297.6 1244.5,1299.7 1236.3,1314 1228.1,1320 1218,1324 1206.5,1317 1174.8,1311 1166,1319.8 1169,1345.8 1157.4,1357.3 1111.2,1389 1091,1405 1056.4,1415 1021.8,1428 1007.3,1444 1004.4,1458.4 992,1464" fill="url(#trees)"/>
<polygon points="1032.1,1082.1 1055.7,1090.3 1049.5,1106.7 1031.1,1119 1022.8,1131.4 1012.6,1125.2 1016.7,1108.8 1029,1102.6" fill="#f2f0ec" />
<polygon points="992.1,1101.6 1002.3,1102.6 1006.4,1104.7 992.1,1107.8" fill="#f2f0ec" />
<polygon points="1000.3,1131.4 1004.4,1127.3 1010.5,1127.3 1001.3,1132.4" fill="#f2f0ec" />
<polygon points="992.1,1040 1006.4,1035.9 1011.6,1044.1 1015.7,1050.3 1008.5,1052.3 992.1,1058.5" fill="#f2f0ec" />
<polygon points="1161.4,1106.7 1154.2,1103.7 1143.9,1106.7 1133.7,1114.9 1129.6,1127.3 1123.4,1143.7 1117.3,1151.9 1117.3,1162.2 1108,1185.8 1113.2,1178.6 1123.4,1181.7 1129.6,1170.4 1135.7,1158 1123.4,1152.9 1131.6,1141.6 1141.9,1121.1 1146,1111.9 1154.2,1108.8" fill="#f2f0ec" />
<polygon points="1192.2,1100.6 1196.3,1108.8 1195.3,1124.2 1188.1,1123.2 1189.1,1110.8" fill="#f2f0ec" />
<polygon points="1207.6,1147.8 1210.6,1162.2 1217.8,1164.2 1216.8,1175.5 1199.4,1175.5 1205.5,1162.2" fill="#f2f0ec" />
<polygon points="1236.3,1158 1249.6,1171.4 1258.9,1185.8 1257.9,1194 1247.6,1191.9 1240.4,1195 1226,1188.8 1215.8,1182.7 1217.8,1175.5 1234.3,1174.5" fill="#f2f0ec" />
<polygon points="1214.8,1209.4 1242.5,1219.6 1250.7,1223.7 1252.7,1229.9 1235.3,1227.8 1234.3,1224.8 1213.7,1218.6" fill="#f2f0ec" />
<polygon points="1246.6,1201.1 1255.8,1204.2 1252.7,1211.4 1244.5,1207.3" fill="#f2f0ec" />
<polygon points="1264,1207.3 1275.3,1209.4 1273.3,1221.7 1265,1219.6" fill="#f2f0ec" />
<polygon points="1226,1228.9 1242.5,1234 1246.6,1230.9 1247.6,1227.8 1235.3,1227.8" fill="#f2f0ec" />
<polygon points="1210.6,1244.3 1217.8,1248.4 1221.9,1256.6 1232.2,1258.6 1233.2,1265.8 1226,1264.8 1207.6,1254.5" fill="#f2f0ec" />
<polygon points="1031.1,1309.9 1036.2,1307.9 1040.3,1316.1 1034.1,1320 1030,1317.1" fill="#f2f0ec" />
<polygon points="1060,1410 1064,1400 1072,1408" fill="#f2f0ec" />
<polygon points="994,1412 1000,1415 1010,1440 994,1445" fill="#f2f0ec" />
<polygon points="994,1480 1005,1462 1008,1478 994,1490" fill="#c2dbb8" />
<polygon points="1262,1075 1270,1070 1282,1078 1290,1092 1300,1096 1296,1102 1280,1094" fill="#c2dbb8" />
<polygon points="1262,1075 1270,1070 1282,1078 1290,1092 1300,1096 1296,1102 1280,1094" fill="url(#trees)"/>
<polygon points="1243,1316 1250,1322 1262,1326 1272,1325 1268,1332 1255,1330 1252,1340 1244,1338" fill="#c2dbb8" />
<polygon points="1243,1316 1250,1322 1262,1326 1272,1325 1268,1332 1255,1330 1252,1340 1244,1338" fill="url(#trees)"/>
<path d="M1541 701.5 C1540.8 702.7 1543.8 706.8 1539.7 708.5 C1535.6 710.2 1524.3 711.7 1516.6 711.7 C1508.9 711.8 1499.8 707.6 1493.5 708.8 C1487.2 710 1483.8 714.3 1479 718.9 C1474.2 723.5 1468.4 730.4 1464.6 736.2 C1460.8 742 1457 747.2 1456 753.5 C1455 759.8 1458.8 767.3 1458.9 773.7 C1459.1 780.1 1459.2 786.8 1456.9 791.8 C1454.6 796.8 1448.9 799.9 1445 803.6 C1441.1 807.3 1436.1 810.7 1433.3 813.9 C1430.5 817.1 1428 820.1 1428 822.8 C1428 825.5 1430 828.4 1433.3 830.2 C1436.6 832.1 1443.1 832.4 1448 833.9 C1452.9 835.4 1458.4 836.4 1462.8 839 C1467.2 841.6 1471.4 845.4 1474.6 849.3 C1477.8 853.2 1480.8 858.4 1482 862.6 C1483.2 866.8 1483.2 869.5 1482 874.4 C1480.8 879.3 1476.3 886.8 1474.6 892 C1472.9 897.2 1471.1 900.5 1471.6 905.4 C1472.1 910.3 1475.3 916.4 1477.5 921.6 C1479.7 926.8 1482.2 931.7 1484.9 936.4 C1487.6 941.1 1490.6 945.5 1493.8 949.7 C1497 953.9 1500.3 958.5 1504 961.5 C1507.7 964.5 1510.5 967.4 1515.9 967.4 C1521.3 967.4 1529.8 963.5 1536.6 961.5 C1543.4 959.5 1548.8 958.5 1557 955.6 C1565.2 952.7 1578.2 948.3 1585.9 944 C1593.6 939.7 1598.9 932.2 1603.2 929.6 C1607.5 927 1608.5 926.8 1611.9 928.2 C1615.3 929.7 1620.5 933.2 1623.4 938.3 C1626.3 943.3 1626.8 953.5 1629.2 958.5 C1631.6 963.5 1632.6 966.9 1637.9 968.6 C1643.2 970.3 1652.3 970.1 1661 968.6 C1669.7 967.1 1681.6 962.3 1689.8 959.9 C1698 957.5 1702.8 954.1 1710 954.1 C1717.2 954.1 1724.3 959.4 1733 959.9 C1741.7 960.4 1750.9 959.2 1762 957 C1773.1 954.8 1787.5 950.3 1799.5 946.9 C1811.5 943.5 1824.4 938.7 1834 936.8 C1843.6 934.9 1850.4 934.7 1857.2 935.4 C1864 936.1 1872 940.2 1875 941.2" fill="none" stroke="#a8d0c6" stroke-width="9" stroke-linejoin="round"/>
<path d="M1347.3 785.8 C1348 788.9 1348.3 799.5 1351.4 804.3 C1354.5 809.1 1361 811.1 1365.8 814.5 C1370.6 817.9 1374.5 822.4 1380 824.8 C1385.5 827.2 1392.8 828.6 1398.6 828.9 C1404.4 829.2 1409.8 827.8 1415 826.8 C1420.2 825.8 1427.5 823.6 1430 823" fill="none" stroke="#a8d0c6" stroke-width="11" stroke-linecap="round"/>
<path d="M1679.7 258 C1678.5 261.5 1674.2 272.2 1672.5 279 C1670.8 285.8 1669.1 293.2 1669.6 299 C1670.1 304.8 1672.5 309.3 1675.4 313.7 C1678.3 318.1 1681 322.4 1687 325.3 C1693 328.2 1706.7 328.6 1711.5 331 C1716.3 333.4 1716.5 335.4 1715.8 339.7 C1715 344 1709.9 351.7 1707 357 C1704.1 362.3 1701.8 365.2 1698.5 371.5 C1695.2 377.8 1690.8 385 1687 394.6 C1683.2 404.2 1678.8 414.8 1675.4 429.2 C1672 443.6 1668.4 466.8 1666.7 481.2 C1665 495.6 1667.2 507.7 1665.3 515.8 C1663.3 523.9 1658.1 524.2 1655 530 C1651.9 535.8 1648.5 542.8 1646.5 550.5 C1644.5 558.2 1644 567.8 1643 576.4 C1642 585 1640.4 595.9 1640.7 602.4 C1641 608.9 1642.1 611.3 1645 615.4 C1647.9 619.5 1655.3 622.9 1658 627 C1660.7 631.1 1661.7 635 1661 640 C1660.3 645 1658.5 653 1653.7 657.3 C1648.9 661.6 1641.4 663.6 1632 666 C1622.6 668.4 1608 668.8 1597.4 671.7 C1586.8 674.6 1577.2 678.9 1568.6 683.2 C1559.9 687.5 1550.1 694.7 1545.5 697.7 C1540.9 700.8 1542 699.7 1541 701.5 C1540 703.3 1543.8 706.8 1539.7 708.5 C1535.6 710.2 1524.3 711.7 1516.6 711.7 C1508.9 711.8 1499.8 707.6 1493.5 708.8 C1487.2 710 1483.8 714.3 1479 718.9 C1474.2 723.5 1468.4 730.4 1464.6 736.2 C1460.8 742 1457 747.2 1456 753.5 C1455 759.8 1458.8 767.3 1458.9 773.7 C1459.1 780.1 1459.2 786.8 1456.9 791.8 C1454.6 796.8 1448.9 799.9 1445 803.6 C1441.1 807.3 1436.1 810.7 1433.3 813.9 C1430.5 817.1 1428 820.1 1428 822.8 C1428 825.5 1430 828.4 1433.3 830.2 C1436.6 832.1 1443.1 832.4 1448 833.9 C1452.9 835.4 1458.4 836.4 1462.8 839 C1467.2 841.6 1471.4 845.4 1474.6 849.3 C1477.8 853.2 1480.8 858.4 1482 862.6 C1483.2 866.8 1483.2 869.5 1482 874.4 C1480.8 879.3 1476.3 886.8 1474.6 892 C1472.9 897.2 1471.1 900.5 1471.6 905.4 C1472.1 910.3 1475.3 916.4 1477.5 921.6 C1479.7 926.8 1482.2 931.7 1484.9 936.4 C1487.6 941.1 1490.6 945.5 1493.8 949.7 C1497 953.9 1500.3 958.5 1504 961.5 C1507.7 964.5 1510.5 967.4 1515.9 967.4 C1521.3 967.4 1529.8 963.5 1536.6 961.5 C1543.4 959.5 1548.8 958.5 1557 955.6 C1565.2 952.7 1578.2 948.3 1585.9 944 C1593.6 939.7 1598.9 932.2 1603.2 929.6 C1607.5 927 1608.5 926.8 1611.9 928.2 C1615.3 929.7 1620.5 933.2 1623.4 938.3 C1626.3 943.3 1626.8 953.5 1629.2 958.5 C1631.6 963.5 1632.6 966.9 1637.9 968.6 C1643.2 970.3 1652.3 970.1 1661 968.6 C1669.7 967.1 1681.6 962.3 1689.8 959.9 C1698 957.5 1702.8 954.1 1710 954.1 C1717.2 954.1 1724.3 959.4 1733 959.9 C1741.7 960.4 1750.9 959.2 1762 957 C1773.1 954.8 1787.5 950.3 1799.5 946.9 C1811.5 943.5 1824.4 938.7 1834 936.8 C1843.6 934.9 1853.3 935.6 1857.2 935.4 L1875 941 L1875 258 Z" fill="#bfdbe4"/>
<path d="M1347.3 785.8 C1348 788.9 1348.3 799.5 1351.4 804.3 C1354.5 809.1 1361 811.1 1365.8 814.5 C1370.6 817.9 1374.5 822.4 1380 824.8 C1385.5 827.2 1392.8 828.6 1398.6 828.9 C1404.4 829.2 1409.8 827.8 1415 826.8 C1420.2 825.8 1427.5 823.6 1430 823" fill="none" stroke="#b4d6d6" stroke-width="4" stroke-linecap="round"/>
<polygon points="1801,258 1817,267.5 1830,270 1845.7,270 1875,266 1875,258" fill="#c2dbb8" />
<polygon points="1801,258 1817,267.5 1830,270 1845.7,270 1875,266 1875,258" fill="url(#trees)"/>
<path d="M1687 395C1680 415 1672 445 1667 481L1666 515" fill="none" stroke="#f3ecc8" stroke-width="1.4"/>
<path d="M1140 612.3 C1142 613.5 1147.2 619.7 1152.3 619.5 C1157.4 619.3 1164.3 614.2 1170.8 611.3 C1177.3 608.4 1185.1 603.5 1191.3 602 C1197.5 600.5 1203.4 600.5 1207.7 602 C1212 603.5 1215.6 607.7 1217 611.3 C1218.4 614.9 1218.6 619.5 1216 623.6 C1213.4 627.7 1206.2 632.6 1201.6 636 C1197 639.4 1190.8 640.8 1188.2 644.2 C1185.6 647.6 1185 651.4 1186.2 656.5 C1187.4 661.6 1191.5 670.2 1195.4 675 C1199.3 679.8 1203.6 682.8 1209.8 685.2 C1216 687.6 1224.9 688.3 1232.4 689.3 C1239.9 690.3 1246.5 689.3 1255 691.4 C1263.5 693.5 1274.8 696.5 1283.7 701.6 C1292.6 706.7 1301.5 716.4 1308.3 722.2 C1315.1 728 1319.9 731.7 1324.7 736.5 C1329.5 741.3 1333.6 746.1 1337 750.9 C1340.4 755.7 1343.6 759.5 1345.3 765.3 C1347 771.1 1347 782.4 1347.3 785.8" fill="none" stroke="#bfdbe4" stroke-width="5.5" stroke-linecap="round"/>
<path d="M992 464 C993.6 466.3 999.3 472.8 1001.5 478 C1003.7 483.2 1003.2 488.8 1005 495 C1006.8 501.2 1008.8 509.5 1012 515 C1015.2 520.5 1021.3 523.8 1024 528 C1026.7 532.2 1029 537 1028 540 C1027 543 1022 546 1018 546 C1014 546 1007.3 543 1004 540 C1000.7 537 999.3 527.2 998 528 C996.7 528.8 995 540 996 545 C997 550 1001.2 555.2 1004 558 C1006.8 560.8 1008.7 561.7 1013 562 C1017.3 562.3 1024.2 560 1030 560 C1035.8 560 1043.3 557.3 1047.7 562 C1052.1 566.7 1053.5 578.9 1056.4 588 C1059.3 597.1 1061.2 610.6 1065 616.9 C1068.8 623.1 1074.2 627 1079.5 625.5 C1084.8 624 1090.5 612.1 1096.8 608.2 C1103 604.4 1109.8 601.7 1117 602.4 C1124.2 603.1 1136.2 610.6 1140 612.3" fill="none" stroke="#bfdbe4" stroke-width="4" stroke-linecap="round"/>
<polygon points="1143.4,572.8 1148.6,572 1152.3,580.2 1150.8,590.5 1158.2,591.2 1159.7,594.9 1156,609.7 1143.4,608.2 1143.4,600.8 1144.9,587.5" fill="#bfdbe4" />
<polygon points="1122.8,602.3 1125.7,586.1 1128.7,585.3 1128.7,596.4 1126.5,603.8" fill="#bfdbe4" />
<path d="M1523.8 348.4 C1529.4 342.2 1528.6 339.3 1539.7 338.3 C1550.8 337.3 1541.6 335.4 1557 345.5 C1572.4 355.6 1575.3 357.1 1585.9 368.6 C1596.5 380.1 1590.8 373.3 1588.8 380 C1586.8 386.7 1589.6 385.9 1580 388.8 C1570.4 391.7 1571.5 392.7 1560 388.8 C1548.5 384.9 1555.2 383.5 1545.5 377.2 C1535.8 370.9 1538.5 376.7 1531 370 C1523.5 363.3 1525.4 364.2 1523 357 C1520.6 349.8 1518.2 354.6 1523.8 348.4Z" fill="#bfdbe4" />
<path d="M1715 1112 C1714.3 1103.3 1713.7 1103.9 1722 1097.6 C1730.3 1091.3 1726.8 1093.9 1740 1093 C1753.2 1092.1 1752.6 1091.6 1761.6 1094.9 C1770.6 1098.2 1769.4 1099.1 1767 1103 C1764.6 1106.9 1759.3 1101.7 1754.5 1106.5 C1749.7 1111.3 1758.7 1111.3 1752.7 1117.3 C1746.7 1123.3 1746.1 1122.4 1736.5 1124.5 C1726.9 1126.6 1731.2 1127.8 1724 1123.6 C1716.8 1119.4 1715.7 1120.7 1715 1112Z" fill="#bfdbe4" />
<path d="M1802 1130 C1803.3 1125.3 1802.7 1126.3 1808 1125 C1813.3 1123.7 1814 1123 1818 1126 C1822 1129 1821.3 1129.3 1820 1134 C1818.7 1138.7 1819.3 1138.3 1814 1140 C1808.7 1141.7 1808 1142.3 1804 1139 C1800 1135.7 1800.7 1134.7 1802 1130Z" fill="#bfdbe4" />
<polygon points="1290,889 1300,891 1297,899 1288,897" fill="#bfdbe4" />
<path d="M1035 926 C1037.5 926.7 1045.5 927.7 1050 930 C1054.5 932.3 1059.3 936.3 1062 940 C1064.7 943.7 1063.7 949 1066 952 C1068.3 955 1073 957.5 1076 958 C1079 958.5 1081.7 954.3 1084 955 C1086.3 955.7 1088.3 959.2 1090 962 C1091.7 964.8 1091.7 972 1094 972 C1096.3 972 1100.7 962.7 1104 962 C1107.3 961.3 1111 965.3 1114 968 C1117 970.7 1120.3 974.3 1122 978 C1123.7 981.7 1122 986.3 1124 990 C1126 993.7 1129.7 995.2 1133.7 1000 C1137.7 1004.8 1142.2 1014 1148 1018.5 C1153.8 1023 1163.5 1023.6 1168.6 1026.7 C1173.7 1029.8 1176.1 1034.6 1178.8 1037 C1181.5 1039.4 1184 1042.4 1185 1041 C1186 1039.6 1183.6 1030.9 1185 1028.7 C1186.4 1026.5 1190.3 1025.8 1193.2 1027.7 C1196.1 1029.6 1197.9 1040.7 1202.4 1040 C1206.9 1039.3 1216.1 1025.1 1220 1023.6 C1223.9 1022.1 1224.1 1028.1 1226 1030.8 C1227.9 1033.5 1231.2 1037.8 1231.2 1040 C1231.2 1042.2 1225.5 1042.1 1226 1044 C1226.5 1045.9 1234.6 1048 1234.3 1051.3 C1234 1054.6 1223 1060.2 1224 1063.6 C1225 1067 1235.3 1068.4 1240.4 1071.8 C1245.5 1075.2 1250.4 1080.4 1254.8 1084.2 C1259.2 1088 1265 1091 1267 1094.4 C1269 1097.8 1268.5 1101.8 1267 1104.7 C1265.5 1107.6 1254.8 1109.9 1257.9 1111.9 C1261 1114 1281 1113.4 1285.6 1117 C1290.2 1120.6 1286.3 1129 1285.6 1133.4 C1284.9 1137.9 1279.5 1140.6 1281.5 1143.7 C1283.5 1146.8 1295 1147.5 1297.9 1151.9 C1300.8 1156.4 1299.9 1164.9 1298.9 1170.4 C1297.9 1175.9 1291.2 1182.7 1291.7 1184.7 C1292.2 1186.8 1299.6 1182.9 1302 1182.7 C1304.4 1182.5 1304.3 1183 1306 1183.5 C1307.7 1184 1308.9 1184.6 1312 1186 C1315.1 1187.4 1322.5 1189.3 1324.6 1192 C1326.7 1194.7 1326 1198.6 1324.6 1202 C1323.2 1205.4 1316.7 1208.7 1316.4 1212.5 C1316.1 1216.3 1320.9 1221.4 1322.6 1224.8 C1324.3 1228.2 1327 1229.2 1326.7 1233 C1326.4 1236.8 1320 1242.6 1320.5 1247.4 C1321 1252.2 1325.9 1257.6 1330 1262 C1334.1 1266.4 1340 1271 1345 1274 C1350 1277 1353.5 1277.3 1360 1280 C1366.5 1282.7 1376.7 1287.3 1384 1290 C1391.3 1292.7 1398 1293.5 1404 1296 C1410 1298.5 1415.7 1301.5 1420 1305 C1424.3 1308.5 1425.5 1311.7 1430 1317 C1434.5 1322.3 1441 1330.8 1447.3 1337 C1453.5 1343.2 1458.4 1347.3 1467.5 1354.5 C1476.6 1361.7 1490 1374.2 1502 1380.4 C1514 1386.7 1527.7 1389.3 1539.7 1392 C1551.8 1394.7 1564.2 1394.9 1574.3 1396.3 C1584.4 1397.7 1592.1 1400.8 1600.3 1400.6 C1608.5 1400.4 1617.1 1393.9 1623.4 1394.9 C1629.7 1395.9 1631.6 1402.8 1637.9 1406.4 C1644.2 1410 1653.8 1413.1 1661 1416.5 C1668.2 1419.9 1673.8 1422 1681 1426.6 C1688.2 1431.2 1697.7 1438.7 1704 1444 C1710.3 1449.3 1715.8 1453.1 1718.7 1458.4 C1721.6 1463.7 1718.7 1470.9 1721.6 1475.7 C1724.5 1480.5 1729.3 1483.3 1736 1487 C1742.7 1490.7 1757.7 1496.2 1762 1498" fill="none" stroke="#bfdbe4" stroke-width="3.2" stroke-linecap="round" stroke-linejoin="round"/>
<path d="M1116 1497 C1115.3 1494.2 1112.7 1485.3 1112 1480 C1111.3 1474.7 1109.8 1469.2 1112 1465 C1114.2 1460.8 1120.3 1459.2 1125 1455 C1129.7 1450.8 1134.5 1445 1140 1440 C1145.5 1435 1153.3 1430 1158 1425 C1162.7 1420 1164 1415.8 1168 1410 C1172 1404.2 1177 1395.8 1182 1390 C1187 1384.2 1192.5 1379.7 1198 1375 C1203.5 1370.3 1209.7 1365.8 1215 1362 C1220.3 1358.2 1225 1354.8 1230 1352 C1235 1349.2 1239.7 1348.3 1245 1345 C1250.3 1341.7 1256.2 1335.8 1262 1332 C1267.8 1328.2 1275.4 1324 1280 1322 C1284.6 1320 1287.8 1322 1289.7 1320 C1291.7 1318 1292.7 1314.1 1291.7 1310 C1290.7 1305.9 1288 1299.4 1283.5 1295.6 C1279 1291.8 1270.3 1289.8 1265 1287.4 C1259.7 1285 1253.8 1284.3 1251.7 1281.2 C1249.7 1278.1 1250.8 1273.7 1252.7 1268.9 C1254.6 1264.1 1259.2 1257.3 1263 1252.5 C1266.8 1247.7 1270.5 1242.8 1275.3 1240 C1280.1 1237.2 1288.6 1238.4 1291.7 1236 C1294.8 1233.6 1295.8 1227.7 1293.8 1225.8 C1291.8 1223.9 1279.1 1226.2 1279.4 1224.8 C1279.7 1223.4 1292.7 1220.5 1295.8 1217.6 C1298.9 1214.7 1300 1209.4 1297.9 1207.3 C1295.9 1205.2 1286.2 1206.7 1283.5 1205 C1280.8 1203.3 1280.1 1200.4 1281.5 1197 C1282.9 1193.6 1290 1186.8 1291.7 1184.7" fill="none" stroke="#bfdbe4" stroke-width="3.2" stroke-linecap="round" stroke-linejoin="round"/>
<path d="M1290 1497 C1293.3 1495.5 1301.7 1491.7 1310 1488 C1318.3 1484.3 1330.8 1479.7 1340 1475 C1349.2 1470.3 1357.5 1465.5 1365 1460 C1372.5 1454.5 1377.5 1445.3 1385 1442 C1392.5 1438.7 1402.5 1440 1410 1440 C1417.5 1440 1424.2 1441.2 1430 1442 C1435.8 1442.8 1440 1445.3 1445 1445 C1450 1444.7 1454.2 1439.5 1460 1440 C1465.8 1440.5 1473.3 1446 1480 1448 C1486.7 1450 1493.3 1449.7 1500 1452 C1506.7 1454.3 1513.7 1461 1520 1462 C1526.3 1463 1533.3 1455.8 1538 1458 C1542.7 1460.2 1543.5 1470 1548 1475 C1552.5 1480 1558.8 1484.3 1565 1488 C1571.2 1491.7 1581.7 1495.5 1585 1497" fill="none" stroke="#bfdbe4" stroke-width="3.2" stroke-linecap="round"/>
<path d="M1686 1428 C1688.3 1426.7 1694.3 1421.7 1700 1420 C1705.7 1418.3 1712.5 1417.2 1720 1418 C1727.5 1418.8 1735 1421.3 1745 1425 C1755 1428.7 1770 1436.2 1780 1440 C1790 1443.8 1798.3 1444.3 1805 1448 C1811.7 1451.7 1814.2 1458.7 1820 1462 C1825.8 1465.3 1831.2 1467.3 1840 1468 C1848.8 1468.7 1867.5 1466.3 1873 1466" fill="none" stroke="#bfdbe4" stroke-width="3.2" stroke-linecap="round"/>
<path d="M1197 857 C1201.7 858.2 1216.5 861.8 1225 864 C1233.5 866.2 1244.2 869 1248 870 M1197 857 L1176 884 M1166 906 C1170 907.7 1183.2 911.3 1190 916 C1196.8 920.7 1201 930.8 1207 934 C1213 937.2 1222.8 934.8 1226 935 M1160 896 C1164.2 898 1178.7 907 1185 908 C1191.3 909 1193.8 902.5 1198 902 C1202.2 901.5 1206 902 1210 905 C1214 908 1220 917.5 1222 920 M1105 472 C1102.5 476.7 1094.2 491.7 1090 500 C1085.8 508.3 1081.7 518.3 1080 522 M1100 515 C1102.5 514.2 1111.3 511.7 1115 510 C1118.7 508.3 1120.8 505.8 1122 505 M1459.6 1027.2 C1460 1028.1 1462.3 1030.7 1462.1 1032.4 C1461.9 1034.1 1459.1 1034.3 1458.3 1037.5 C1457.5 1040.7 1456.8 1048.4 1457 1051.6 C1457.2 1054.8 1457.2 1055.3 1459.6 1056.7 C1461.9 1058.1 1469.2 1059.4 1471.1 1059.9 M1460.9 1036.2 C1463.7 1036.6 1473 1038.6 1477.5 1038.8 C1482 1039 1486.1 1037.7 1487.8 1037.5 M1482.7 1027.2 L1481.4 1032.4 M1487.8 1037.5 C1487.2 1038.3 1486 1040.7 1483.9 1042.6 C1481.8 1044.5 1477.3 1046.8 1475 1049 C1472.7 1051.2 1470.7 1054.4 1469.8 1055.5 M1487.8 1037.5 C1489.1 1039 1495.7 1044.2 1495.5 1046.5 C1495.3 1048.8 1488 1050.8 1486.5 1051.6 M1473.7 1063.2 C1476.5 1064.7 1485.9 1070 1490.4 1072.1 C1494.9 1074.2 1495.7 1074.7 1500.6 1076 C1505.5 1077.3 1516.7 1079.2 1519.9 1079.8 M1495.5 1059.3 C1497.8 1060 1505.5 1061.3 1509.6 1063.2 C1513.7 1065.1 1518.2 1069.6 1519.9 1070.9 M1511 1056 C1515.8 1053.3 1529.3 1044.3 1540 1040 C1550.7 1035.7 1563.7 1031.3 1575 1030 C1586.3 1028.7 1603.2 1025.3 1608 1032 C1612.8 1038.7 1607.5 1056.7 1604 1070 C1600.5 1083.3 1589.8 1105 1587 1112 M1570 936 C1568.7 938.3 1562.7 945.7 1562 950 C1561.3 954.3 1565.3 960 1566 962" fill="none" stroke="#e6c9a0" stroke-width="0.9" stroke-dasharray="3 2.5"/>
<path d="M994 628.4 L1018.9 651.5 L1036.2 661.6 L1062.2 655.8 L1091 664.5 L1120 674.6 L1145.9 687.6 L1174.8 690 L1215.2 692.9 L1235.4 701.5 L1255.6 708.8 L1284.5 716 L1293 724.6 L1301.8 739 L1316.2 752 L1327.8 765 M1307.5 1259.2 L1306 1296.7 L1324.9 1308.3 L1322 1337 L1329.2 1366 L1324.9 1400.6 L1304.7 1426.6 L1296 1452.6 L1261.4 1475.7 L1241.2 1480 L1235.4 1497 M1484.8 1407.9 L1520 1406 L1557 1400.6 L1591.7 1397.8 L1632 1402 L1655.2 1412.2 L1678.3 1429.5 L1698.5 1444 L1718.7 1464.2 L1724.5 1481.5 L1747.5 1493 M1653.7 1314 L1649.4 1348.7 L1645 1371.8 L1655.2 1410.7" fill="none" stroke="#d4d3d1" stroke-width="2.6" stroke-linecap="butt"/>
<path d="M994 628.4 L1018.9 651.5 L1036.2 661.6 L1062.2 655.8 L1091 664.5 L1120 674.6 L1145.9 687.6 L1174.8 690 L1215.2 692.9 L1235.4 701.5 L1255.6 708.8 L1284.5 716 L1293 724.6 L1301.8 739 L1316.2 752 L1327.8 765 M1307.5 1259.2 L1306 1296.7 L1324.9 1308.3 L1322 1337 L1329.2 1366 L1324.9 1400.6 L1304.7 1426.6 L1296 1452.6 L1261.4 1475.7 L1241.2 1480 L1235.4 1497 M1484.8 1407.9 L1520 1406 L1557 1400.6 L1591.7 1397.8 L1632 1402 L1655.2 1412.2 L1678.3 1429.5 L1698.5 1444 L1718.7 1464.2 L1724.5 1481.5 L1747.5 1493 M1653.7 1314 L1649.4 1348.7 L1645 1371.8 L1655.2 1410.7" fill="none" stroke="#f7f6f4" stroke-width="1.7" stroke-dasharray="1.2 1.2"/>
<path d="M1105.5 267.5 L1189.2 289 L1189.2 306 L1104 280 L1105.5 267.5 M1099.7 290.6 L1192 318 M1095.4 302 L1154.5 318 L1152 325 M1089.6 322.4 L1212.3 358.5 M1106 394 L1076 448 M1118 418 L1092 470 L1086 486 M1034 452 L1050 415 M1111.2 837.2 L1096.8 883.4 M1099.7 874.8 L1160.3 870.4 M1085.3 889 L1065 935.4 M1120 845 L1118 872 M1138 850 L1132 872 M1156 858 L1152 872 M1052 898 L1078 896 M1050 914 L1072 912 M1048 922 L1070 926 M1206 492 L1196 520 L1190 545 M1222 495 L1212 530 L1206 548 M1258 540 L1250 570 M1268 545 L1258 575 M1345 436 L1362 440 L1352 490 L1335 485 L1345 436 M1352 490 L1380 500 L1390 520 L1378 575 L1330 560 L1340 520 L1352 490 M1340 520 L1385 535 M1330 560 L1322 600 M1362 498 L1355 530 M1330 595 L1322 640 L1345 648 L1350 610 M1312 658 L1330 665 L1343 695 M1450 690 L1470 700 L1462 720 M1440 715 L1455 725 L1460 745 M1540 1135 L1520 1200 M1560 1140 L1548 1185 M1520 1200 L1500 1260 M1575 1140 L1560 1165 L1548 1175 L1545 1230 L1538 1270 M1562 1150 L1590 1160 L1632 1178 L1625 1200 L1612 1215 M1590 1160 L1585 1190 M1620 1140 L1612 1170 M1560 1210 L1548 1212 M1563 1205 L1585 1212 M1568 1248 L1560 1275 M1625 1140 L1645 1145 L1642 1175 L1625 1200 M1655 1260 L1650 1290 L1640 1310 M1668 1270 L1660 1305 M1678 1285 L1672 1310 M1708 1275 L1690 1330 M1715 1282 L1740 1288 M1830 1205 L1815 1255 L1800 1300 M1808 1250 L1780 1300 M1792 1265 L1775 1265 M1780 1288 L1758 1282 M1773 1300 L1752 1296 M1773 1000 L1790 1012 L1820 1025 M1805 1010 L1795 1060 L1780 1110 L1765 1160 M1790 1015 L1772 1080 M1770 1030 L1790 1035 M1768 1048 L1785 1052 M1760 1075 L1778 1080 M1812 955 L1800 980 M1803 955 L1790 985" fill="none" stroke="#d4d3d1" stroke-width="1.9" stroke-linecap="butt"/>
<path d="M1105.5 267.5 L1189.2 289 L1189.2 306 L1104 280 L1105.5 267.5 M1099.7 290.6 L1192 318 M1095.4 302 L1154.5 318 L1152 325 M1089.6 322.4 L1212.3 358.5 M1106 394 L1076 448 M1118 418 L1092 470 L1086 486 M1034 452 L1050 415 M1111.2 837.2 L1096.8 883.4 M1099.7 874.8 L1160.3 870.4 M1085.3 889 L1065 935.4 M1120 845 L1118 872 M1138 850 L1132 872 M1156 858 L1152 872 M1052 898 L1078 896 M1050 914 L1072 912 M1048 922 L1070 926 M1206 492 L1196 520 L1190 545 M1222 495 L1212 530 L1206 548 M1258 540 L1250 570 M1268 545 L1258 575 M1345 436 L1362 440 L1352 490 L1335 485 L1345 436 M1352 490 L1380 500 L1390 520 L1378 575 L1330 560 L1340 520 L1352 490 M1340 520 L1385 535 M1330 560 L1322 600 M1362 498 L1355 530 M1330 595 L1322 640 L1345 648 L1350 610 M1312 658 L1330 665 L1343 695 M1450 690 L1470 700 L1462 720 M1440 715 L1455 725 L1460 745 M1540 1135 L1520 1200 M1560 1140 L1548 1185 M1520 1200 L1500 1260 M1575 1140 L1560 1165 L1548 1175 L1545 1230 L1538 1270 M1562 1150 L1590 1160 L1632 1178 L1625 1200 L1612 1215 M1590 1160 L1585 1190 M1620 1140 L1612 1170 M1560 1210 L1548 1212 M1563 1205 L1585 1212 M1568 1248 L1560 1275 M1625 1140 L1645 1145 L1642 1175 L1625 1200 M1655 1260 L1650 1290 L1640 1310 M1668 1270 L1660 1305 M1678 1285 L1672 1310 M1708 1275 L1690 1330 M1715 1282 L1740 1288 M1830 1205 L1815 1255 L1800 1300 M1808 1250 L1780 1300 M1792 1265 L1775 1265 M1780 1288 L1758 1282 M1773 1300 L1752 1296 M1773 1000 L1790 1012 L1820 1025 M1805 1010 L1795 1060 L1780 1110 L1765 1160 M1790 1015 L1772 1080 M1770 1030 L1790 1035 M1768 1048 L1785 1052 M1760 1075 L1778 1080 M1812 955 L1800 980 M1803 955 L1790 985" fill="none" stroke="#f7f6f4" stroke-width="1" stroke-dasharray="1.2 1.2"/>
<path d="M992 1480 C994.1 1477.3 1001.9 1469.5 1004.4 1464 C1006.9 1458.5 1004.4 1452.8 1007.3 1446.8 C1010.2 1440.8 1013.6 1433 1021.8 1428 C1030 1423 1044.9 1420.3 1056.4 1416.5 C1067.9 1412.7 1081.9 1409.6 1091 1405 C1100.1 1400.4 1100.1 1397 1111.2 1389 C1122.3 1381 1146.8 1364 1157.4 1357.3 C1168 1350.6 1168 1350.9 1174.8 1348.7 C1181.5 1346.5 1190.2 1346.7 1197.9 1344.3 C1205.6 1341.9 1214.3 1338.3 1221 1334.2 C1227.7 1330.1 1232.5 1324.8 1238.3 1319.8 C1244.1 1314.8 1249.3 1308.1 1255.6 1304 C1261.8 1299.9 1271.5 1297.5 1275.8 1295.3 C1280.1 1293.1 1276.3 1296.5 1281.6 1291 C1286.9 1285.5 1298.4 1272.1 1307.5 1262 C1316.6 1251.9 1326.8 1240.9 1336.4 1230.3 C1346 1219.7 1356.3 1206.7 1365.3 1198.6 C1374.3 1190.5 1386.1 1184.5 1390.3 1181.7 M1393.4 1130.4 C1396.3 1131.1 1402.4 1129 1410.8 1134.5 C1419.2 1140 1431.4 1151.9 1443.7 1163.2 C1456 1174.5 1474.4 1191.9 1484.7 1202.2 C1495 1212.5 1498.5 1218.3 1505.3 1224.8 C1512.1 1231.3 1517.7 1234.3 1525.8 1241.2 C1533.9 1248.1 1547.3 1261.5 1554 1266.4 C1560.7 1271.3 1559.4 1266.6 1565.7 1270.7 C1572 1274.8 1585.5 1285.7 1591.7 1291 C1598 1296.3 1596.5 1299.9 1603.2 1302.5 C1609.9 1305.1 1620.9 1305.4 1632 1306.8 C1643.1 1308.2 1655.1 1306 1669.6 1311 C1684 1316 1700.9 1327.3 1718.7 1337 C1736.5 1346.7 1760.5 1360.8 1776.4 1369 C1792.3 1377.2 1804.4 1382.9 1814 1386.2 C1823.6 1389.5 1823.8 1388.8 1834 1389 C1844.2 1389.2 1868.2 1387.9 1875 1387.7 M1391.3 1130.7 C1384.6 1131.2 1364.9 1131.9 1350.9 1133.6 C1336.9 1135.3 1318.1 1138.9 1307.5 1140.8 C1296.9 1142.7 1290.7 1144.5 1287.3 1145.2" fill="none" stroke="#dcdad8" stroke-width="3.8" stroke-linejoin="round" stroke-linecap="round"/>
<path d="M992 1480 C994.1 1477.3 1001.9 1469.5 1004.4 1464 C1006.9 1458.5 1004.4 1452.8 1007.3 1446.8 C1010.2 1440.8 1013.6 1433 1021.8 1428 C1030 1423 1044.9 1420.3 1056.4 1416.5 C1067.9 1412.7 1081.9 1409.6 1091 1405 C1100.1 1400.4 1100.1 1397 1111.2 1389 C1122.3 1381 1146.8 1364 1157.4 1357.3 C1168 1350.6 1168 1350.9 1174.8 1348.7 C1181.5 1346.5 1190.2 1346.7 1197.9 1344.3 C1205.6 1341.9 1214.3 1338.3 1221 1334.2 C1227.7 1330.1 1232.5 1324.8 1238.3 1319.8 C1244.1 1314.8 1249.3 1308.1 1255.6 1304 C1261.8 1299.9 1271.5 1297.5 1275.8 1295.3 C1280.1 1293.1 1276.3 1296.5 1281.6 1291 C1286.9 1285.5 1298.4 1272.1 1307.5 1262 C1316.6 1251.9 1326.8 1240.9 1336.4 1230.3 C1346 1219.7 1356.3 1206.7 1365.3 1198.6 C1374.3 1190.5 1386.1 1184.5 1390.3 1181.7 M1393.4 1130.4 C1396.3 1131.1 1402.4 1129 1410.8 1134.5 C1419.2 1140 1431.4 1151.9 1443.7 1163.2 C1456 1174.5 1474.4 1191.9 1484.7 1202.2 C1495 1212.5 1498.5 1218.3 1505.3 1224.8 C1512.1 1231.3 1517.7 1234.3 1525.8 1241.2 C1533.9 1248.1 1547.3 1261.5 1554 1266.4 C1560.7 1271.3 1559.4 1266.6 1565.7 1270.7 C1572 1274.8 1585.5 1285.7 1591.7 1291 C1598 1296.3 1596.5 1299.9 1603.2 1302.5 C1609.9 1305.1 1620.9 1305.4 1632 1306.8 C1643.1 1308.2 1655.1 1306 1669.6 1311 C1684 1316 1700.9 1327.3 1718.7 1337 C1736.5 1346.7 1760.5 1360.8 1776.4 1369 C1792.3 1377.2 1804.4 1382.9 1814 1386.2 C1823.6 1389.5 1823.8 1388.8 1834 1389 C1844.2 1389.2 1868.2 1387.9 1875 1387.7 M1391.3 1130.7 C1384.6 1131.2 1364.9 1131.9 1350.9 1133.6 C1336.9 1135.3 1318.1 1138.9 1307.5 1140.8 C1296.9 1142.7 1290.7 1144.5 1287.3 1145.2" fill="none" stroke="#fff" stroke-width="2.4" stroke-linejoin="round" stroke-linecap="round"/>
<path d="M1254.1 284.9 L1221 391.7 L1189.2 495.6 L1179 530.2 L1182 547.6 M1254.1 284.9 L1293 280.5 L1330.6 276.2 L1365.3 277.6 L1401.4 286.3 M1293 258 L1288.8 280.5 M1190.6 258 L1196.4 293.5 L1206.5 328 L1221 391.7 M1367.8 618.5 L1400 628 L1440 640 L1462 648 M1258.5 710.2 L1241.2 768 M1170.4 860.3 L1151.7 929.6 L1134.3 978.7 L1125.7 987.4 M1125.7 987.4 L1076.6 958.5 L1033.3 929.6 L994 929.6 M1033.3 929.6 L1018.9 978.7 L1013 1013.3 L1079.5 1033.5 M994 704.4 L1033.3 782.4 L1059.3 822.8 M1125.7 987.4 L1135 1002" fill="none" stroke="#dcdad8" stroke-width="2.9" stroke-linejoin="round" stroke-linecap="round"/>
<path d="M1254.1 284.9 L1221 391.7 L1189.2 495.6 L1179 530.2 L1182 547.6 M1254.1 284.9 L1293 280.5 L1330.6 276.2 L1365.3 277.6 L1401.4 286.3 M1293 258 L1288.8 280.5 M1190.6 258 L1196.4 293.5 L1206.5 328 L1221 391.7 M1367.8 618.5 L1400 628 L1440 640 L1462 648 M1258.5 710.2 L1241.2 768 M1170.4 860.3 L1151.7 929.6 L1134.3 978.7 L1125.7 987.4 M1125.7 987.4 L1076.6 958.5 L1033.3 929.6 L994 929.6 M1033.3 929.6 L1018.9 978.7 L1013 1013.3 L1079.5 1033.5 M994 704.4 L1033.3 782.4 L1059.3 822.8 M1125.7 987.4 L1135 1002" fill="none" stroke="#fff" stroke-width="1.5" stroke-linejoin="round" stroke-linecap="round"/>
<path d="M1417 1020 L1440 1030 L1455 1028 M1425 1040 L1442 1045 L1440 1060 M1418 1052 L1430 1058 M1430 1030 L1426 1050 M1442 1030 L1452 1050 L1446 1062 M1049.2 334 L1070.8 354 L1056.4 383 L1030.4 412 L1010 443.6 L1013 452 M1044.8 455 L1040 475 L1050 480 L1040 520 L1036 545 L1052 548 M1060 490 L1062 505 L1040 498 M1015 290 L1005 320 L994 340 M1040 300 L1050 310 L1045 325 M1052 600 L1040 608 L1036 640 L1050 645 M1018 574 L1024 582 L1020 600 M1134 456 L1130 470 L1120 498 L1110 520 M1158 468 L1152 492 L1140 520 M1000 770 L1015 772 L1030 782 L1012 808 L1018 812 M994 775 L1020 770 M1100 790 L1112 792 L1118 805 L1140 805 M1197 786 L1208 788 L1212 805 L1222 818 L1238 818 L1232 786 L1228 782 M1222 818 L1208 826 M1002 858 L1016 864 L1008 895 M1000 875 L994 873 M1380 632 L1395 660 L1412 652 M1375 665 L1382 700 M1420 640 L1412 668 L1400 690 M1340 745 L1348 760 L1372 795 L1385 815 M1352 768 L1358 748 M1355 785 L1372 770 L1380 778 L1362 795 L1355 785 M1260 832 L1285 838 L1300 830 L1322 826 L1340 830 M1300 1087 L1320 1088 L1318 1100 L1290 1098 M1318 1100 L1325 1118 L1310 1135 M1335 1105 L1332 1135 M1347 1110 L1343 1134 M1300 1112 L1325 1116 M1318 1262 L1300 1255 L1275 1270 M1262 1272 L1268 1262 L1280 1258 L1275 1248 M1290 1245 L1300 1252 M1295 1238 L1306 1246 M1285 1262 L1296 1270 M1308 1275 L1302 1290 L1298 1320 M1290 1282 L1300 1288 M1335 1238 L1322 1232 M1345 1225 L1330 1218 M1355 1212 L1342 1205 M1470 1163 L1490 1166 L1478 1200 M1468 1175 L1462 1205 M1490 1185 L1480 1218 M1430 1340 L1440 1345 L1438 1355 M1420 1265 L1435 1268 M1473 1340 L1500 1345 L1525 1350 L1560 1348 L1595 1368 L1612 1376 M1480 1348 L1478 1380 M1496 1345 L1495 1382 M1508 1348 L1507 1385 M1530 1350 L1532 1382 M1553 1265 L1560 1330 L1562 1345 M1555 1295 L1570 1293 M1550 1330 L1562 1330 M1600 1305 L1598 1330 M1622 1308 L1612 1348 M1612 1340 L1622 1342 M1595 1245 L1608 1225 L1625 1222 L1620 1245 L1600 1248 M1620 1290 L1630 1258 L1638 1256 L1632 1290 L1620 1290 M1642 1365 L1624 1352 M1620 1352 L1622 1340 M1560 1402 L1565 1440 L1572 1497 M1572 1450 L1600 1462 L1592 1490 M1580 1438 L1584 1420 M1600 1462 L1615 1448 M1610 1405 L1612 1440 M1625 1405 L1628 1425 M1678 1430 L1668 1470 L1640 1475 M1668 1470 L1672 1497 M1700 1446 L1690 1478 M1720 1470 L1735 1442 L1748 1445 M1722 1480 L1700 1497 M1660 1414 L1700 1412 L1740 1410 M1695 1412 L1698 1422 L1755 1425 L1780 1425 L1786 1392 M1740 1392 L1786 1392 M1700 1316 L1685 1360 M1720 1332 L1705 1360 M1760 1362 L1752 1385 M1770 1365 L1765 1382 M1745 1370 L1738 1390 L1725 1390 M1858 1345 L1855 1385 M1620 1000 L1640 1008 L1665 1010 L1678 1011 L1670 1030 L1685 1032 M1645 1008 L1640 1025 L1655 1028 M1640 1025 L1632 1040 M1692 985 L1682 1030 M1700 985 L1690 1025 M1732 982 L1722 1020 L1715 1035 L1708 1040 M1752 980 L1745 1010 L1758 1035 L1745 1060 L1735 1090 L1720 1100 L1715 1112 M1745 1035 L1725 1040 L1718 1055 L1710 1090 L1700 1115 M1685 1042 L1712 1048 L1705 1075 L1682 1068 L1685 1042 M1682 1080 L1705 1088 L1700 1105 L1688 1102 M1840 960 L1830 985 L1825 1000 M1822 958 L1842 955 L1855 965 M1775 1118 L1790 1118 L1798 1130 L1805 1150 L1795 1180 M1855 1130 L1873 1135 M1850 1150 L1862 1165 M1845 1075 L1860 1085 M1838 1095 L1855 1110 M1858 1040 L1873 1043 M1455 1085 L1445 1100 M1395 1080 L1440 1092 M1620 932 L1612 945 L1604 950 L1600 975 L1607 990 M1596 958 L1590 985 M1612 945 L1625 955" fill="none" stroke="#d9d8d6" stroke-width="2" stroke-linejoin="round" stroke-linecap="round"/>
<path d="M1417 1020 L1440 1030 L1455 1028 M1425 1040 L1442 1045 L1440 1060 M1418 1052 L1430 1058 M1430 1030 L1426 1050 M1442 1030 L1452 1050 L1446 1062 M1049.2 334 L1070.8 354 L1056.4 383 L1030.4 412 L1010 443.6 L1013 452 M1044.8 455 L1040 475 L1050 480 L1040 520 L1036 545 L1052 548 M1060 490 L1062 505 L1040 498 M1015 290 L1005 320 L994 340 M1040 300 L1050 310 L1045 325 M1052 600 L1040 608 L1036 640 L1050 645 M1018 574 L1024 582 L1020 600 M1134 456 L1130 470 L1120 498 L1110 520 M1158 468 L1152 492 L1140 520 M1000 770 L1015 772 L1030 782 L1012 808 L1018 812 M994 775 L1020 770 M1100 790 L1112 792 L1118 805 L1140 805 M1197 786 L1208 788 L1212 805 L1222 818 L1238 818 L1232 786 L1228 782 M1222 818 L1208 826 M1002 858 L1016 864 L1008 895 M1000 875 L994 873 M1380 632 L1395 660 L1412 652 M1375 665 L1382 700 M1420 640 L1412 668 L1400 690 M1340 745 L1348 760 L1372 795 L1385 815 M1352 768 L1358 748 M1355 785 L1372 770 L1380 778 L1362 795 L1355 785 M1260 832 L1285 838 L1300 830 L1322 826 L1340 830 M1300 1087 L1320 1088 L1318 1100 L1290 1098 M1318 1100 L1325 1118 L1310 1135 M1335 1105 L1332 1135 M1347 1110 L1343 1134 M1300 1112 L1325 1116 M1318 1262 L1300 1255 L1275 1270 M1262 1272 L1268 1262 L1280 1258 L1275 1248 M1290 1245 L1300 1252 M1295 1238 L1306 1246 M1285 1262 L1296 1270 M1308 1275 L1302 1290 L1298 1320 M1290 1282 L1300 1288 M1335 1238 L1322 1232 M1345 1225 L1330 1218 M1355 1212 L1342 1205 M1470 1163 L1490 1166 L1478 1200 M1468 1175 L1462 1205 M1490 1185 L1480 1218 M1430 1340 L1440 1345 L1438 1355 M1420 1265 L1435 1268 M1473 1340 L1500 1345 L1525 1350 L1560 1348 L1595 1368 L1612 1376 M1480 1348 L1478 1380 M1496 1345 L1495 1382 M1508 1348 L1507 1385 M1530 1350 L1532 1382 M1553 1265 L1560 1330 L1562 1345 M1555 1295 L1570 1293 M1550 1330 L1562 1330 M1600 1305 L1598 1330 M1622 1308 L1612 1348 M1612 1340 L1622 1342 M1595 1245 L1608 1225 L1625 1222 L1620 1245 L1600 1248 M1620 1290 L1630 1258 L1638 1256 L1632 1290 L1620 1290 M1642 1365 L1624 1352 M1620 1352 L1622 1340 M1560 1402 L1565 1440 L1572 1497 M1572 1450 L1600 1462 L1592 1490 M1580 1438 L1584 1420 M1600 1462 L1615 1448 M1610 1405 L1612 1440 M1625 1405 L1628 1425 M1678 1430 L1668 1470 L1640 1475 M1668 1470 L1672 1497 M1700 1446 L1690 1478 M1720 1470 L1735 1442 L1748 1445 M1722 1480 L1700 1497 M1660 1414 L1700 1412 L1740 1410 M1695 1412 L1698 1422 L1755 1425 L1780 1425 L1786 1392 M1740 1392 L1786 1392 M1700 1316 L1685 1360 M1720 1332 L1705 1360 M1760 1362 L1752 1385 M1770 1365 L1765 1382 M1745 1370 L1738 1390 L1725 1390 M1858 1345 L1855 1385 M1620 1000 L1640 1008 L1665 1010 L1678 1011 L1670 1030 L1685 1032 M1645 1008 L1640 1025 L1655 1028 M1640 1025 L1632 1040 M1692 985 L1682 1030 M1700 985 L1690 1025 M1732 982 L1722 1020 L1715 1035 L1708 1040 M1752 980 L1745 1010 L1758 1035 L1745 1060 L1735 1090 L1720 1100 L1715 1112 M1745 1035 L1725 1040 L1718 1055 L1710 1090 L1700 1115 M1685 1042 L1712 1048 L1705 1075 L1682 1068 L1685 1042 M1682 1080 L1705 1088 L1700 1105 L1688 1102 M1840 960 L1830 985 L1825 1000 M1822 958 L1842 955 L1855 965 M1775 1118 L1790 1118 L1798 1130 L1805 1150 L1795 1180 M1855 1130 L1873 1135 M1850 1150 L1862 1165 M1845 1075 L1860 1085 M1838 1095 L1855 1110 M1858 1040 L1873 1043 M1455 1085 L1445 1100 M1395 1080 L1440 1092 M1620 932 L1612 945 L1604 950 L1600 975 L1607 990 M1596 958 L1590 985 M1612 945 L1625 955" fill="none" stroke="#fbfbfa" stroke-width="1" stroke-linejoin="round" stroke-linecap="round"/>
<path d="M1582.4 258 C1582.4 262.5 1583 276.6 1582.4 284.9 C1581.8 293.2 1578.6 299.8 1578.7 308 C1578.8 316.2 1580.1 325.3 1583 334 C1585.9 342.7 1592.9 352.8 1596 360 C1599.1 367.2 1601.8 372.2 1601.8 377.2 C1601.8 382.2 1601.5 385.6 1596 390.2 C1590.5 394.8 1575.1 399.2 1568.6 404.7 C1562.1 410.2 1562.3 415.5 1557 423.4 C1551.7 431.3 1544.7 441.7 1536.8 452.3 C1528.9 462.9 1516.1 473.6 1509.4 487 C1502.7 500.4 1498.8 516.7 1496.4 533 C1494 549.3 1494.5 575.3 1495 585 C1495.5 594.7 1496 588.8 1499.3 591 C1502.6 593.2 1512.1 595.4 1515 598 C1517.9 600.6 1519.2 598.3 1516.6 606.7 C1514 615.1 1507 632.1 1499.3 648.6 C1491.6 665.1 1476.6 693.8 1470.4 706 C1464.2 718.2 1465.4 715.5 1462 722 C1458.6 728.5 1452.7 737.8 1450 745 C1447.3 752.2 1447.1 759.2 1446 765 C1444.9 770.8 1444.7 775.5 1443.6 780 C1442.5 784.5 1441.9 787.6 1439.2 791.8 C1436.5 796 1431.6 801.7 1427.4 805 C1423.2 808.3 1416.2 810.6 1414 811.7" fill="none" stroke="#d9dcaa" stroke-width="4.8" stroke-linejoin="round" stroke-linecap="round"/>
<path d="M1582.4 258 C1582.4 262.5 1583 276.6 1582.4 284.9 C1581.8 293.2 1578.6 299.8 1578.7 308 C1578.8 316.2 1580.1 325.3 1583 334 C1585.9 342.7 1592.9 352.8 1596 360 C1599.1 367.2 1601.8 372.2 1601.8 377.2 C1601.8 382.2 1601.5 385.6 1596 390.2 C1590.5 394.8 1575.1 399.2 1568.6 404.7 C1562.1 410.2 1562.3 415.5 1557 423.4 C1551.7 431.3 1544.7 441.7 1536.8 452.3 C1528.9 462.9 1516.1 473.6 1509.4 487 C1502.7 500.4 1498.8 516.7 1496.4 533 C1494 549.3 1494.5 575.3 1495 585 C1495.5 594.7 1496 588.8 1499.3 591 C1502.6 593.2 1512.1 595.4 1515 598 C1517.9 600.6 1519.2 598.3 1516.6 606.7 C1514 615.1 1507 632.1 1499.3 648.6 C1491.6 665.1 1476.6 693.8 1470.4 706 C1464.2 718.2 1465.4 715.5 1462 722 C1458.6 728.5 1452.7 737.8 1450 745 C1447.3 752.2 1447.1 759.2 1446 765 C1444.9 770.8 1444.7 775.5 1443.6 780 C1442.5 784.5 1441.9 787.6 1439.2 791.8 C1436.5 796 1431.6 801.7 1427.4 805 C1423.2 808.3 1416.2 810.6 1414 811.7" fill="none" stroke="#f4f6c6" stroke-width="3.6" stroke-linejoin="round" stroke-linecap="round"/>
<path d="M1392.4 1061.6 C1394.8 1061.8 1398.2 1060.4 1406.7 1062.6 C1415.2 1064.8 1427.3 1069.9 1443.7 1075 C1460.1 1080.1 1484.8 1086.9 1505.3 1093.4 C1525.8 1099.9 1550.5 1109 1566.8 1114 C1583.1 1119 1584.2 1117.6 1603.2 1123.5 C1622.2 1129.4 1657 1141.3 1681 1149.5 C1705 1157.7 1722 1164.4 1747.5 1172.6 C1773 1180.8 1812.8 1192.3 1834 1198.6 C1855.2 1204.9 1868.2 1208.5 1875 1210.5" fill="none" stroke="#d9dcaa" stroke-width="5.8" stroke-linejoin="round" stroke-linecap="round"/>
<path d="M1392.4 1061.6 C1394.8 1061.8 1398.2 1060.4 1406.7 1062.6 C1415.2 1064.8 1427.3 1069.9 1443.7 1075 C1460.1 1080.1 1484.8 1086.9 1505.3 1093.4 C1525.8 1099.9 1550.5 1109 1566.8 1114 C1583.1 1119 1584.2 1117.6 1603.2 1123.5 C1622.2 1129.4 1657 1141.3 1681 1149.5 C1705 1157.7 1722 1164.4 1747.5 1172.6 C1773 1180.8 1812.8 1192.3 1834 1198.6 C1855.2 1204.9 1868.2 1208.5 1875 1210.5" fill="none" stroke="#f4f6c6" stroke-width="4.6" stroke-linejoin="round" stroke-linecap="round"/>
<path d="M1868.8 1066 C1866.4 1074.6 1858.7 1101.9 1854.4 1117.7 C1850.1 1133.5 1846.2 1148 1842.8 1161 C1839.4 1174 1835.5 1189.9 1834 1195.7" fill="none" stroke="#d9dcaa" stroke-width="3.8" stroke-linejoin="round" stroke-linecap="round"/>
<path d="M1868.8 1066 C1866.4 1074.6 1858.7 1101.9 1854.4 1117.7 C1850.1 1133.5 1846.2 1148 1842.8 1161 C1839.4 1174 1835.5 1189.9 1834 1195.7" fill="none" stroke="#f4f6c6" stroke-width="2.6" stroke-linejoin="round" stroke-linecap="round"/>
<path d="M1349.2 819.8 C1353.4 821.8 1365.2 827.4 1374.3 831.6 C1383.4 835.8 1396.2 841.9 1403.8 845 C1411.4 848.1 1413.4 844.6 1420 850 C1426.6 855.4 1439.7 872.8 1443.6 877.4 M1372.8 883.3 L1392 865.6 M1372.8 883.3 C1378.5 888.5 1396.2 904.7 1406.7 914.3 C1417.2 923.9 1431.1 936.5 1436 941 M1443.6 877.4 C1439.7 880.8 1428.4 889.4 1420 898 C1411.6 906.6 1397.8 923.8 1393.4 929 M1393.4 929 C1394.5 931.8 1397.5 939.9 1400 946 C1402.5 952.1 1406.8 962.6 1408.2 965.9 M1443.6 877.4 C1447.3 882.1 1461.3 898 1465.7 905.4 C1470.1 912.8 1468 916.1 1470 922 C1472 927.9 1473.8 935 1477.5 940.8 C1481.2 946.6 1485.4 951.1 1492.3 957 C1499.2 962.9 1513.5 970 1518.9 976.2 C1524.3 982.4 1523.8 991 1524.8 994 M1452.5 881.8 L1427 908 M1446.6 952.6 C1445.5 954.7 1441.7 961.1 1440 965 C1438.3 968.9 1436.8 974.3 1436.2 976.2 M1419 960 C1418 962.5 1415.3 970 1413 975 C1410.7 980 1406.3 987.5 1405 990" fill="none" stroke="#d9dcaa" stroke-width="4.2" stroke-linejoin="round" stroke-linecap="round"/>
<path d="M1349.2 819.8 C1353.4 821.8 1365.2 827.4 1374.3 831.6 C1383.4 835.8 1396.2 841.9 1403.8 845 C1411.4 848.1 1413.4 844.6 1420 850 C1426.6 855.4 1439.7 872.8 1443.6 877.4 M1372.8 883.3 L1392 865.6 M1372.8 883.3 C1378.5 888.5 1396.2 904.7 1406.7 914.3 C1417.2 923.9 1431.1 936.5 1436 941 M1443.6 877.4 C1439.7 880.8 1428.4 889.4 1420 898 C1411.6 906.6 1397.8 923.8 1393.4 929 M1393.4 929 C1394.5 931.8 1397.5 939.9 1400 946 C1402.5 952.1 1406.8 962.6 1408.2 965.9 M1443.6 877.4 C1447.3 882.1 1461.3 898 1465.7 905.4 C1470.1 912.8 1468 916.1 1470 922 C1472 927.9 1473.8 935 1477.5 940.8 C1481.2 946.6 1485.4 951.1 1492.3 957 C1499.2 962.9 1513.5 970 1518.9 976.2 C1524.3 982.4 1523.8 991 1524.8 994 M1452.5 881.8 L1427 908 M1446.6 952.6 C1445.5 954.7 1441.7 961.1 1440 965 C1438.3 968.9 1436.8 974.3 1436.2 976.2 M1419 960 C1418 962.5 1415.3 970 1413 975 C1410.7 980 1406.3 987.5 1405 990" fill="none" stroke="#f4f6c6" stroke-width="3" stroke-linejoin="round" stroke-linecap="round"/>
<path d="M992 346 C996.5 350.2 1008.2 361 1018.9 371.5 C1029.6 382 1042.9 394.2 1056.4 409.1 C1069.9 424 1084.8 443.7 1099.7 461 C1114.6 478.3 1132.4 500 1145.9 513 C1159.4 526 1167 529.4 1180.5 539 C1194 548.6 1213 563.1 1226.7 570.7 C1240.5 578.3 1249.4 579.9 1263 584.6 C1276.6 589.3 1294.6 594.7 1308.3 599 C1322 603.3 1335.4 607 1345.3 610.3 C1355.2 613.5 1362 615.2 1367.8 618.5 C1373.6 621.8 1375.9 623.5 1380 629.8 C1384.1 636.1 1388 646.2 1392.5 656.5 C1397 666.8 1403 680.1 1406.8 691.4 C1410.5 702.7 1413.8 713.6 1415 724.2 C1416.2 734.8 1415 743.7 1414 755 C1413 766.3 1409.6 782.8 1408.9 792 C1408.2 801.2 1408.7 805.3 1410 810.4 C1411.3 815.5 1416 818.6 1417 822.7 C1418 826.8 1418.4 830.2 1416 835 C1413.6 839.8 1406.5 846.7 1402.7 851.5 C1398.9 856.3 1395 861.9 1393.4 864 M992 836 C996.7 835 1008.7 831.7 1020 830 C1031.3 828.3 1046.7 826.3 1060 826 C1073.3 825.7 1088.3 826.7 1100 828 C1111.7 829.3 1120.6 830.4 1130 834 C1139.4 837.6 1149.6 845.8 1156.4 849.4 C1163.2 853 1165 854.9 1170.8 855.6 C1176.6 856.3 1184.5 855.5 1191.3 853.5 C1198.1 851.5 1203.2 849.1 1211.8 843.3 C1220.3 837.5 1231.3 828.2 1242.6 818.6 C1253.9 809 1270 794 1279.6 785.8 C1289.2 777.6 1294.2 772.6 1300 769.4 C1305.8 766.1 1310 766.3 1314.5 766.3 C1319 766.3 1323.4 767.5 1326.8 769.4 C1330.2 771.3 1333 773.2 1335 777.6 C1337 782 1337.1 789.5 1339 796 C1340.9 802.5 1342.8 810.5 1346.2 816.9 C1349.6 823.3 1354.8 829.2 1359.5 834.6 C1364.2 840 1368.9 844.1 1374.3 849.3 C1379.7 854.5 1385.6 859.7 1392 865.6 C1398.4 871.5 1405.7 878.4 1412.6 884.8 C1419.5 891.2 1427.6 898.6 1433.3 904 C1439 909.4 1444.7 914.8 1447 917 M1447 917 C1446.2 919.2 1443.8 926 1442 930 C1440.2 934 1439 937 1436 941 C1433 945 1428.4 949.3 1424 954 C1419.6 958.7 1411.7 963.8 1409.7 969 C1407.7 974.2 1409.8 979.7 1412 985 C1414.2 990.3 1422.4 995.6 1423.2 1001 C1424 1006.4 1420.4 1012.7 1417 1017.5 C1413.6 1022.3 1406.7 1025 1402.6 1029.8 C1398.5 1034.6 1394.8 1041.8 1392.4 1046.2 C1390 1050.7 1388.7 1051.7 1388.3 1056.5 C1387.9 1061.3 1389.3 1067.1 1390.3 1075 C1391.3 1082.9 1393.9 1094.5 1394.4 1103.7 C1394.9 1112.9 1392 1122.9 1393.4 1130.4 C1394.8 1137.9 1399 1140.2 1402.6 1148.8 C1406.2 1157.3 1410.2 1169 1415 1181.7 C1419.8 1194.4 1426 1211.4 1431.4 1224.8 C1436.8 1238.2 1440.3 1244.2 1447.3 1262 C1454.3 1279.8 1470.2 1315.1 1473.3 1331.4 C1476.4 1347.7 1466 1350.9 1466 1360 C1466 1369.1 1469.7 1374.9 1473.3 1386 C1476.9 1397.1 1481.8 1407.8 1487.7 1426.6 C1493.7 1445.4 1505.5 1486.9 1509 1499 M1436 941 C1439.3 944.2 1449.6 954.1 1456 960 C1462.4 965.9 1467.7 970.9 1474.5 976.4 C1481.3 981.9 1490.2 989.4 1497 992.8 C1503.8 996.2 1508 996.6 1515.5 997 C1523 997.4 1533.7 996.4 1542.2 994.9 C1550.8 993.4 1557.6 988.7 1566.8 987.7 C1576 986.7 1586.7 987.6 1597.6 988.7 C1608.5 989.9 1616.6 995.1 1632 994.6 C1647.4 994.1 1670.5 988.6 1689.8 986 C1709 983.4 1733.1 980.2 1747.5 978.7 C1761.9 977.2 1767.7 976.2 1776.4 977.2 C1785.1 978.2 1792.3 980.9 1799.5 984.5 C1806.7 988.1 1813 994.1 1819.7 998.9 C1826.5 1003.7 1830.8 1009.4 1840 1013.3 C1849.2 1017.1 1869.2 1020.5 1875 1022" fill="none" stroke="#e3bc8c" stroke-width="5.2" stroke-linejoin="round" stroke-linecap="round"/>
<path d="M992 346 C996.5 350.2 1008.2 361 1018.9 371.5 C1029.6 382 1042.9 394.2 1056.4 409.1 C1069.9 424 1084.8 443.7 1099.7 461 C1114.6 478.3 1132.4 500 1145.9 513 C1159.4 526 1167 529.4 1180.5 539 C1194 548.6 1213 563.1 1226.7 570.7 C1240.5 578.3 1249.4 579.9 1263 584.6 C1276.6 589.3 1294.6 594.7 1308.3 599 C1322 603.3 1335.4 607 1345.3 610.3 C1355.2 613.5 1362 615.2 1367.8 618.5 C1373.6 621.8 1375.9 623.5 1380 629.8 C1384.1 636.1 1388 646.2 1392.5 656.5 C1397 666.8 1403 680.1 1406.8 691.4 C1410.5 702.7 1413.8 713.6 1415 724.2 C1416.2 734.8 1415 743.7 1414 755 C1413 766.3 1409.6 782.8 1408.9 792 C1408.2 801.2 1408.7 805.3 1410 810.4 C1411.3 815.5 1416 818.6 1417 822.7 C1418 826.8 1418.4 830.2 1416 835 C1413.6 839.8 1406.5 846.7 1402.7 851.5 C1398.9 856.3 1395 861.9 1393.4 864 M992 836 C996.7 835 1008.7 831.7 1020 830 C1031.3 828.3 1046.7 826.3 1060 826 C1073.3 825.7 1088.3 826.7 1100 828 C1111.7 829.3 1120.6 830.4 1130 834 C1139.4 837.6 1149.6 845.8 1156.4 849.4 C1163.2 853 1165 854.9 1170.8 855.6 C1176.6 856.3 1184.5 855.5 1191.3 853.5 C1198.1 851.5 1203.2 849.1 1211.8 843.3 C1220.3 837.5 1231.3 828.2 1242.6 818.6 C1253.9 809 1270 794 1279.6 785.8 C1289.2 777.6 1294.2 772.6 1300 769.4 C1305.8 766.1 1310 766.3 1314.5 766.3 C1319 766.3 1323.4 767.5 1326.8 769.4 C1330.2 771.3 1333 773.2 1335 777.6 C1337 782 1337.1 789.5 1339 796 C1340.9 802.5 1342.8 810.5 1346.2 816.9 C1349.6 823.3 1354.8 829.2 1359.5 834.6 C1364.2 840 1368.9 844.1 1374.3 849.3 C1379.7 854.5 1385.6 859.7 1392 865.6 C1398.4 871.5 1405.7 878.4 1412.6 884.8 C1419.5 891.2 1427.6 898.6 1433.3 904 C1439 909.4 1444.7 914.8 1447 917 M1447 917 C1446.2 919.2 1443.8 926 1442 930 C1440.2 934 1439 937 1436 941 C1433 945 1428.4 949.3 1424 954 C1419.6 958.7 1411.7 963.8 1409.7 969 C1407.7 974.2 1409.8 979.7 1412 985 C1414.2 990.3 1422.4 995.6 1423.2 1001 C1424 1006.4 1420.4 1012.7 1417 1017.5 C1413.6 1022.3 1406.7 1025 1402.6 1029.8 C1398.5 1034.6 1394.8 1041.8 1392.4 1046.2 C1390 1050.7 1388.7 1051.7 1388.3 1056.5 C1387.9 1061.3 1389.3 1067.1 1390.3 1075 C1391.3 1082.9 1393.9 1094.5 1394.4 1103.7 C1394.9 1112.9 1392 1122.9 1393.4 1130.4 C1394.8 1137.9 1399 1140.2 1402.6 1148.8 C1406.2 1157.3 1410.2 1169 1415 1181.7 C1419.8 1194.4 1426 1211.4 1431.4 1224.8 C1436.8 1238.2 1440.3 1244.2 1447.3 1262 C1454.3 1279.8 1470.2 1315.1 1473.3 1331.4 C1476.4 1347.7 1466 1350.9 1466 1360 C1466 1369.1 1469.7 1374.9 1473.3 1386 C1476.9 1397.1 1481.8 1407.8 1487.7 1426.6 C1493.7 1445.4 1505.5 1486.9 1509 1499 M1436 941 C1439.3 944.2 1449.6 954.1 1456 960 C1462.4 965.9 1467.7 970.9 1474.5 976.4 C1481.3 981.9 1490.2 989.4 1497 992.8 C1503.8 996.2 1508 996.6 1515.5 997 C1523 997.4 1533.7 996.4 1542.2 994.9 C1550.8 993.4 1557.6 988.7 1566.8 987.7 C1576 986.7 1586.7 987.6 1597.6 988.7 C1608.5 989.9 1616.6 995.1 1632 994.6 C1647.4 994.1 1670.5 988.6 1689.8 986 C1709 983.4 1733.1 980.2 1747.5 978.7 C1761.9 977.2 1767.7 976.2 1776.4 977.2 C1785.1 978.2 1792.3 980.9 1799.5 984.5 C1806.7 988.1 1813 994.1 1819.7 998.9 C1826.5 1003.7 1830.8 1009.4 1840 1013.3 C1849.2 1017.1 1869.2 1020.5 1875 1022" fill="none" stroke="#f7d7ae" stroke-width="4" stroke-linejoin="round" stroke-linecap="round"/>
<rect x="1026" y="391" width="31" height="19" rx="2" fill="#f6e4d2" stroke="#dcbd9b" stroke-width="0.9"/>
<text x="1041.5" y="404.3" font-size="10.5" fill="#7b6551" text-anchor="middle" font-family="Liberation Sans,sans-serif">199</text>
<rect x="1126.2" y="829.9" width="37" height="19" rx="2" fill="#f6e4d2" stroke="#dcbd9b" stroke-width="0.9"/>
<text x="1144.7" y="843.2" font-size="10.5" fill="#7b6551" text-anchor="middle" font-family="Liberation Sans,sans-serif">S-91</text>
<rect x="1474.8" y="654.4" width="37.5" height="18.7" rx="2" fill="#f3f4dc" stroke="#cfd1aa" stroke-width="0.9"/>
<text x="1493.5" y="667.5" font-size="10.5" fill="#6f704f" text-anchor="middle" font-family="Liberation Sans,sans-serif">S-69</text>
<rect x="1435.5" y="913.2" width="29.5" height="18.8" rx="2" fill="#f6e4d2" stroke="#dcbd9b" stroke-width="0.9"/>
<text x="1450.3" y="926.4" font-size="10.5" fill="#7b6551" text-anchor="middle" font-family="Liberation Sans,sans-serif">199</text>
<rect x="1390.8" y="978.4" width="51.6" height="18.8" rx="2" fill="#f6e4d2" stroke="#dcbd9b" stroke-width="0.9"/>
<text x="1416.6" y="991.6" font-size="10.5" fill="#7b6551" text-anchor="middle" font-family="Liberation Sans,sans-serif">S-95-T</text>
<rect x="1519.7" y="1096.5" width="43.7" height="18.5" rx="2" fill="#f3f4dc" stroke="#cfd1aa" stroke-width="0.9"/>
<text x="1541.5" y="1109.5" font-size="10.5" fill="#6f704f" text-anchor="middle" font-family="Liberation Sans,sans-serif">S-839</text>
<rect x="1484" y="1495.5" width="52" height="8" rx="2" fill="#f6e4d2" stroke="#dcbd9b" stroke-width="0.9"/>
<text x="1510" y="1503.3" font-size="10.5" fill="#7b6551" text-anchor="middle" font-family="Liberation Sans,sans-serif"></text>
<text x="1011" y="512" font-size="10.5" fill="#6d9fd3" text-anchor="middle" transform="rotate(66 1011 512)" stroke="#f4f2ee" stroke-width="2" paint-order="stroke" stroke-linejoin="round" font-family="Liberation Sans,sans-serif" font-style="italic">Río Toltén</text>
<text x="1346" y="780" font-size="10.5" fill="#6d9fd3" text-anchor="middle" transform="rotate(76 1346 780)" stroke="#f4f2ee" stroke-width="2" paint-order="stroke" stroke-linejoin="round" font-family="Liberation Sans,sans-serif" font-style="italic">Río Toltén</text>
<text x="1009" y="920" font-size="10.5" fill="#6d9fd3" text-anchor="middle" transform="rotate(10 1009 920)" stroke="#f4f2ee" stroke-width="2" paint-order="stroke" stroke-linejoin="round" font-family="Liberation Sans,sans-serif" font-style="italic">Río Voipir</text>
<text x="1338" y="1261" font-size="10.5" fill="#6d9fd3" text-anchor="middle" transform="rotate(37 1338 1261)" stroke="#f4f2ee" stroke-width="2" paint-order="stroke" stroke-linejoin="round" font-family="Liberation Sans,sans-serif" font-style="italic">Río Voipir</text>
<text x="1762" y="1435" font-size="10.5" fill="#6d9fd3" text-anchor="middle" transform="rotate(16 1762 1435)" stroke="#f4f2ee" stroke-width="2" paint-order="stroke" stroke-linejoin="round" font-family="Liberation Sans,sans-serif" font-style="italic">Estero Los Chilcos</text>
<text x="1278" y="1488" font-size="10.5" fill="#6d9fd3" text-anchor="middle" transform="rotate(-17 1278 1488)" stroke="#f4f2ee" stroke-width="2" paint-order="stroke" stroke-linejoin="round" font-family="Liberation Sans,sans-serif" font-style="italic">Gallico</text>
<text x="1511" y="625" font-size="8.5" fill="#5d5d4a" text-anchor="middle" transform="rotate(-68 1511 625)" stroke="#f4f2ee" stroke-width="2" paint-order="stroke" stroke-linejoin="round" font-family="Liberation Sans,sans-serif" >Ruta S-69</text>
<text x="1118" y="830.5" font-size="8.5" fill="#5f5040" text-anchor="middle" transform="rotate(8 1118 830.5)" stroke="#f4f2ee" stroke-width="2" paint-order="stroke" stroke-linejoin="round" font-family="Liberation Sans,sans-serif" >Ruta S-91</text>
<text x="1441" y="1252" font-size="8.5" fill="#5f5040" text-anchor="middle" transform="rotate(67 1441 1252)" stroke="#f4f2ee" stroke-width="2" paint-order="stroke" stroke-linejoin="round" font-family="Liberation Sans,sans-serif" >Ruta S-95-T</text>
<text x="1478.5" y="1402" font-size="8.5" fill="#5f5040" text-anchor="middle" transform="rotate(67 1478.5 1402)" stroke="#f4f2ee" stroke-width="2" paint-order="stroke" stroke-linejoin="round" font-family="Liberation Sans,sans-serif" >Ruta S-95-T</text>
<text x="1708" y="1160" font-size="9" fill="#5d5d4a" text-anchor="middle" transform="rotate(16.5 1708 1160)" stroke="#f4f2ee" stroke-width="2" paint-order="stroke" stroke-linejoin="round" font-family="Liberation Sans,sans-serif" >Segunda Faja</text>
<text x="1858.5" y="1128" font-size="8.5" fill="#5d5d4a" text-anchor="middle" transform="rotate(-75 1858.5 1128)" stroke="#f4f2ee" stroke-width="2" paint-order="stroke" stroke-linejoin="round" font-family="Liberation Sans,sans-serif" >Camino Los Guindos - Segunda Faja</text>
<text x="1003" y="366" font-size="8.5" fill="#5f5040" text-anchor="middle" transform="rotate(52 1003 366)" stroke="#f4f2ee" stroke-width="2" paint-order="stroke" stroke-linejoin="round" font-family="Liberation Sans,sans-serif" >Brasseaux</text>
<text x="994" y="1305" font-size="9" fill="#8a6f62" text-anchor="start" stroke="#f4f2ee" stroke-width="2" paint-order="stroke" stroke-linejoin="round" font-family="Liberation Sans,sans-serif" >re</text>
<text x="1412" y="1169" font-size="10.5" fill="#8a6cc7" text-anchor="middle" stroke="#f4f2ee" stroke-width="2" paint-order="stroke" stroke-linejoin="round" font-family="Liberation Sans,sans-serif" font-style="italic">Aeródromo</text>
<text x="1413" y="1183.5" font-size="10.5" fill="#8a6cc7" text-anchor="middle" stroke="#f4f2ee" stroke-width="2" paint-order="stroke" stroke-linejoin="round" font-family="Liberation Sans,sans-serif" font-style="italic">Villarrica</text>
<path d="M1412 1145.5c.8 0 1.1 1 1.1 2v2.6l5.2 3v1.3l-5.2-1.6v3.2l1.6 1.2v1l-2.7-.7-2.7.7v-1l1.6-1.2v-3.2l-5.2 1.6v-1.3l5.2-3v-2.6c0-1 .3-2 1.1-2z" fill="#8a6cc7"/>
<text x="1475.5" y="876" font-size="10.5" fill="#5fac6c" text-anchor="middle" stroke="#f4f2ee" stroke-width="2" paint-order="stroke" stroke-linejoin="round" font-family="Liberation Sans,sans-serif" font-style="italic">Humedal</text>
<text x="1475.5" y="889.3" font-size="10.5" fill="#5fac6c" text-anchor="middle" stroke="#f4f2ee" stroke-width="2" paint-order="stroke" stroke-linejoin="round" font-family="Liberation Sans,sans-serif" font-style="italic">Urbano</text>
<text x="1475.5" y="902.6" font-size="10.5" fill="#5fac6c" text-anchor="middle" stroke="#f4f2ee" stroke-width="2" paint-order="stroke" stroke-linejoin="round" font-family="Liberation Sans,sans-serif" font-style="italic">Mallolafquen</text>
<text x="1428.5" y="862" font-size="14.5" fill="#6a6a6a" text-anchor="middle" stroke="#f4f2ee" stroke-width="2" paint-order="stroke" stroke-linejoin="round" font-family="Liberation Sans,sans-serif" >Villarrica</text>
<g transform="translate(1186 743) scale(1)" stroke="#ececec" stroke-width="1.3" fill="none" stroke-linecap="round"><path d="M-3.5 4.5L3 -2.5M3.5 4.5L-3 -2.5M-4.6 -1.2C-3.8 -3.2 -2.4 -3.9 -0.8 -3.6M4.6 -1.2C3.8 -3.2 2.4 -3.9 0.8 -3.6"/></g>
<g transform="translate(1089.5 570.5) scale(1)" stroke="#ececec" stroke-width="1.3" fill="none" stroke-linecap="round"><path d="M-3.5 4.5L3 -2.5M3.5 4.5L-3 -2.5M-4.6 -1.2C-3.8 -3.2 -2.4 -3.9 -0.8 -3.6M4.6 -1.2C3.8 -3.2 2.4 -3.9 0.8 -3.6"/></g>
<g transform="translate(1137.5 600.5) scale(1)" stroke="#ececec" stroke-width="1.3" fill="none" stroke-linecap="round"><path d="M-3.5 4.5L3 -2.5M3.5 4.5L-3 -2.5M-4.6 -1.2C-3.8 -3.2 -2.4 -3.9 -0.8 -3.6M4.6 -1.2C3.8 -3.2 2.4 -3.9 0.8 -3.6"/></g>
<circle cx="1264" cy="781" r="1.6" fill="#8fe0c8"/>
<rect x="1074" y="808" width="9" height="14" fill="#a3dcb0" transform="rotate(15 1078 815)"/><rect x="1083" y="810" width="8" height="13" fill="#f4f4c0" transform="rotate(15 1087 816)"/>
<line x1="1019.7" y1="260" x2="1019.7" y2="1497" stroke="#fff" stroke-opacity=".55" stroke-width=".7"/>
<line x1="1307.5" y1="260" x2="1307.5" y2="1497" stroke="#fff" stroke-opacity=".55" stroke-width=".7"/>
<line x1="1595.4" y1="260" x2="1595.4" y2="1497" stroke="#fff" stroke-opacity=".55" stroke-width=".7"/>
<line x1="994" y1="468.8" x2="1873" y2="468.8" stroke="#fff" stroke-opacity=".3" stroke-width=".7"/>
<line x1="994" y1="756.8" x2="1873" y2="756.8" stroke="#fff" stroke-opacity=".3" stroke-width=".7"/>
<line x1="994" y1="1044.8" x2="1873" y2="1044.8" stroke="#fff" stroke-opacity=".3" stroke-width=".7"/>
<line x1="994" y1="1332.8" x2="1873" y2="1332.8" stroke="#fff" stroke-opacity=".3" stroke-width=".7"/>
<path d="M1434 877.5L1442 867L1450 860.5L1455 862L1453 867L1444 873Z" fill="#000" opacity=".22" filter="url(#blur1)"/>
<path d="M1434 877.6C1431.5 868 1420.8 859 1420.8 847.6A13.2 13.2 0 0 1 1447.2 847.6C1447.2 859 1436.5 868 1434 877.6Z" fill="url(#mk)" stroke="#4f8cc6" stroke-width="1"/>
<circle cx="1434" cy="847.4" r="4.7" fill="#fbfbfb"/>
<rect x="1005" y="271" width="38" height="72" rx="5" fill="#000" fill-opacity=".22"/>
<rect x="1007" y="273" width="34" height="68" rx="3" fill="#fff"/>
<line x1="1007" y1="307" x2="1041" y2="307" stroke="#ccc" stroke-width="1"/>
<path d="M1017.5 290.5h14M1024.5 283.5v14M1017.5 324h14" stroke="#333" stroke-width="2" fill="none"/>
<rect x="1804" y="1478" width="69" height="19" fill="#fff" fill-opacity=".8"/>
<rect x="1808.7" y="1482" width="13.9" height="4.4" fill="#4c7be1"/><rect x="1808.7" y="1486.4" width="13.9" height="4.4" fill="#ffd500"/>
<text x="1826.5" y="1491" font-size="13.4" fill="#3a93bd" font-family="Liberation Sans,sans-serif">Leaflet</text>
</svg>

</body>
</html>
